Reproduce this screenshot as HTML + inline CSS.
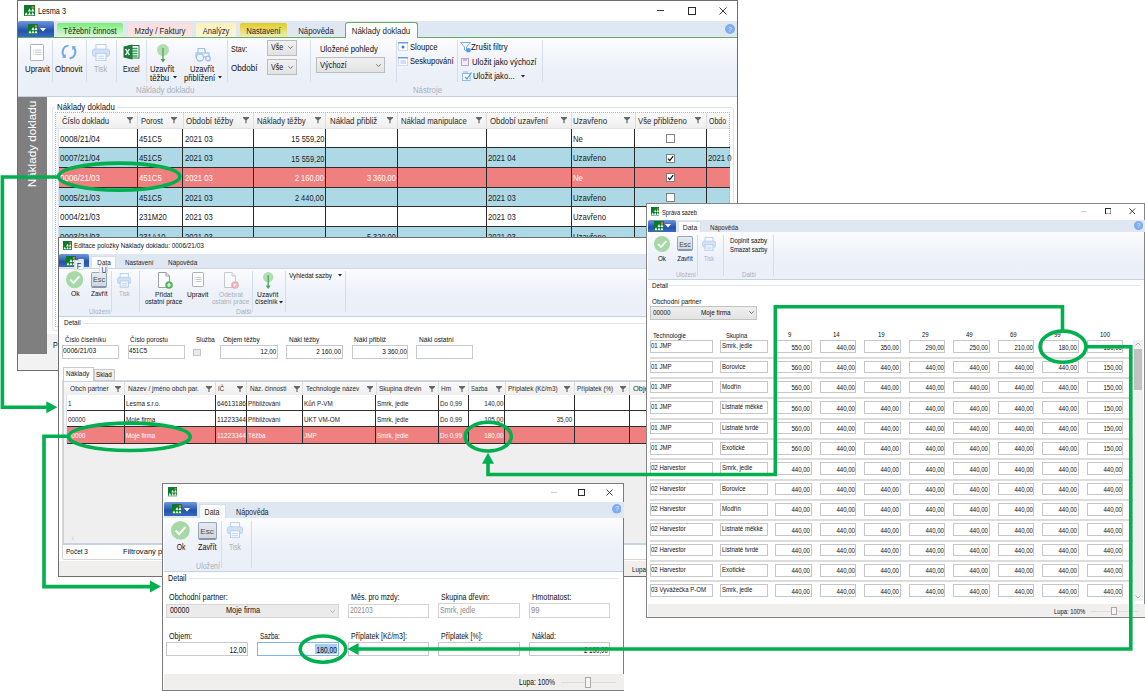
<!DOCTYPE html><html><head><meta charset="utf-8"><style>
html,body{margin:0;padding:0;}
body{width:1145px;height:691px;position:relative;overflow:hidden;background:#fff;font-family:"Liberation Sans", sans-serif;}
.a{position:absolute;}
.t{position:absolute;white-space:pre;font-family:"Liberation Sans", sans-serif;}
</style></head><body>
<div class="a" style="left:17px;top:0px;width:721px;height:371px;background:#fff;border:1px solid #6e6e6e;box-sizing:border-box;"></div>
<svg class="a" style="left:24px;top:5px;" width="11" height="11" viewBox="0 0 11 11"><rect x="0" y="0" width="11" height="11" fill="#0b7a2c"/><circle cx="8.8" cy="2.2" r="1.3199999999999998" fill="#f07020"/><path d="M2.20 6.93 L3.85 10.23 L0.55 10.23Z" fill="#f4fbf4"/><path d="M5.50 3.30 L7.15 6.60 L3.85 6.60Z" fill="#f4fbf4"/><path d="M5.50 6.93 L7.15 10.23 L3.85 10.23Z" fill="#f4fbf4"/><path d="M8.80 3.30 L10.45 6.60 L7.15 6.60Z" fill="#f4fbf4"/><path d="M8.80 6.93 L10.45 10.23 L7.15 10.23Z" fill="#f4fbf4"/></svg>
<div class="t" style="left:38px;transform-origin:0 50%;top:6.94px;font-size:8.47px;line-height:9.74px;color:#101010;transform:scaleX(0.8620);">Lesma 3</div>
<svg class="a" style="left:718.5px;top:6.5px;" width="8" height="8" viewBox="0 0 8 8"><path d="M0.5 0.5L7.5 7.5M7.5 0.5L0.5 7.5" stroke="#2b2b2b" stroke-width="0.9"/></svg>
<svg class="a" style="left:687.7px;top:6.5px;" width="8" height="8" viewBox="0 0 8 8"><rect x="0.5" y="0.5" width="7" height="7" fill="none" stroke="#2b2b2b" stroke-width="1"/></svg>
<svg class="a" style="left:657.4px;top:10.0px;" width="8" height="2" viewBox="0 0 8 2"><rect x="0" y="0" width="7" height="1" fill="#3a3a3a"/></svg>
<div class="a" style="left:18px;top:21px;width:719px;height:16px;background:#dfe7f2;"></div>
<div class="a" style="left:18px;top:37px;width:719px;height:1px;background:#64b064;"></div>
<div class="a" style="left:18px;top:21px;width:36px;height:16px;background:linear-gradient(#7098dc,#3564bd 45%,#2352aa 60%,#3a6ac4);border-radius:2px 2px 0 0;"></div>
<svg class="a" style="left:28.0px;top:24.0px;" width="10" height="10" viewBox="0 0 10 10"><rect x="0" y="0" width="10" height="10" fill="#0b7a2c"/><circle cx="8.0" cy="2.0" r="1.2" fill="#f07020"/><path d="M2.00 6.30 L3.50 9.30 L0.50 9.30Z" fill="#f4fbf4"/><path d="M5.00 3.00 L6.50 6.00 L3.50 6.00Z" fill="#f4fbf4"/><path d="M5.00 6.30 L6.50 9.30 L3.50 9.30Z" fill="#f4fbf4"/><path d="M8.00 3.00 L9.50 6.00 L6.50 6.00Z" fill="#f4fbf4"/><path d="M8.00 6.30 L9.50 9.30 L6.50 9.30Z" fill="#f4fbf4"/></svg>
<svg class="a" style="left:39.5px;top:27.5px;" width="6" height="4" viewBox="0 0 6 4"><path d="M0 0H6L3 3.5Z" fill="#fff"/></svg>
<div class="a" style="left:57px;top:23px;width:66px;height:14px;background:linear-gradient(#78ee78,#e4f6e0);border-radius:2px 2px 0 0;"></div>
<div class="t" style="left:42.0px;width:96px;text-align:center;transform-origin:50% 50%;top:26.94px;font-size:8.47px;line-height:9.74px;color:#262626;transform:scaleX(0.8914);">Těžební činnost</div>
<div class="a" style="left:128px;top:23px;width:64px;height:14px;background:linear-gradient(#fcdcdc,#fbe6e6);border-radius:2px 2px 0 0;"></div>
<div class="t" style="left:113.0px;width:94px;text-align:center;transform-origin:50% 50%;top:26.94px;font-size:8.47px;line-height:9.74px;color:#262626;transform:scaleX(0.9184);">Mzdy / Faktury</div>
<div class="a" style="left:196px;top:23px;width:40px;height:14px;background:linear-gradient(#fdf3b8,#faf6de);border-radius:2px 2px 0 0;"></div>
<div class="t" style="left:181.0px;width:70px;text-align:center;transform-origin:50% 50%;top:26.94px;font-size:8.47px;line-height:9.74px;color:#262626;transform:scaleX(0.8969);">Analýzy</div>
<div class="a" style="left:240px;top:23px;width:47px;height:14px;background:linear-gradient(#e0ce1e,#f0eab8);border-radius:2px 2px 0 0;"></div>
<div class="t" style="left:225.0px;width:77px;text-align:center;transform-origin:50% 50%;top:26.94px;font-size:8.47px;line-height:9.74px;color:#262626;transform:scaleX(0.9047);">Nastavení</div>
<div class="t" style="left:286.0px;width:60px;text-align:center;transform-origin:50% 50%;top:26.94px;font-size:8.47px;line-height:9.74px;color:#262626;transform:scaleX(0.9194);">Nápověda</div>
<div class="a" style="left:345px;top:22px;width:73px;height:16px;background:linear-gradient(#ffffff,#f9fbfd);border:1px solid #64b064;border-bottom:none;box-sizing:border-box;border-radius:3px 3px 0 0;"></div>
<div class="t" style="left:336.0px;width:90px;text-align:center;transform-origin:50% 50%;top:27.14px;font-size:8.47px;line-height:9.74px;color:#262626;transform:scaleX(0.9342);">Náklady dokladu</div>
<svg class="a" style="left:725px;top:23.7px;" width="10" height="10" viewBox="0 0 10 10"><circle cx="5" cy="5" r="5" fill="#7fadf0"/><text x="5" y="7.6" font-size="7.0" text-anchor="middle" fill="#e8f0ff" font-family="Liberation Sans">?</text></svg>
<div class="a" style="left:18px;top:38px;width:719px;height:59px;background:linear-gradient(#fdfdfe,#f1f4fa 35%,#ecf0f8 60%,#ebeff7);"></div>
<div class="a" style="left:18px;top:96px;width:719px;height:1px;background:#c4d1e3;"></div>
<div class="a" style="left:52px;top:40px;width:1px;height:42px;background:#d5dde9;"></div>
<div class="a" style="left:86px;top:40px;width:1px;height:42px;background:#d5dde9;"></div>
<div class="a" style="left:116px;top:40px;width:1px;height:42px;background:#d5dde9;"></div>
<div class="a" style="left:146px;top:40px;width:1px;height:42px;background:#d5dde9;"></div>
<div class="a" style="left:227px;top:40px;width:1px;height:42px;background:#d5dde9;"></div>
<div class="a" style="left:310px;top:40px;width:1px;height:42px;background:#d5dde9;"></div>
<div class="a" style="left:396px;top:40px;width:1px;height:42px;background:#d5dde9;"></div>
<div class="a" style="left:457px;top:40px;width:1px;height:42px;background:#d5dde9;"></div>
<div class="a" style="left:542px;top:40px;width:1px;height:42px;background:#d5dde9;"></div>
<svg class="a" style="left:30px;top:44px;" width="14" height="17" viewBox="0 0 14 17"><rect x="0.5" y="0.5" width="13" height="16" rx="0.8" fill="#fff" stroke="#a3a8b0" stroke-width="0.9"/><path d="M3.08 6.12H4.2M5.04 6.12H11.200000000000001" stroke="#a8adb5" stroke-width="0.7"/><path d="M3.08 8.22H4.2M5.04 8.22H11.200000000000001" stroke="#a8adb5" stroke-width="0.7"/><path d="M3.08 10.32H4.2M5.04 10.32H11.200000000000001" stroke="#a8adb5" stroke-width="0.7"/></svg>
<div class="t" style="left:24.8px;transform-origin:0 50%;top:64.94px;font-size:8.47px;line-height:9.74px;color:#101010;transform:scaleX(0.9282);">Upravit</div>
<svg class="a" style="left:60.3px;top:43px;" width="18" height="18" viewBox="0 0 18 18"><path d="M8.44 2.62A6.4 6.4 0 0 0 4.10 13.11" fill="none" stroke="#6aa4ee" stroke-width="1.8"/><path d="M9.56 15.38A6.4 6.4 0 0 0 13.90 4.89" fill="none" stroke="#6aa4ee" stroke-width="1.8"/><path d="M5.77 15.11L1.64 14.39L5.78 10.92Z" fill="#6aa4ee"/><path d="M12.23 2.89L16.36 3.61L12.22 7.08Z" fill="#6aa4ee"/></svg>
<div class="t" style="left:55.4px;transform-origin:0 50%;top:64.94px;font-size:8.47px;line-height:9.74px;color:#101010;transform:scaleX(0.9422);">Obnovit</div>
<svg class="a" style="left:92px;top:44px;" width="18" height="17" viewBox="0 0 18 17"><g opacity="0.45"><rect x="3.96" y="0.5" width="10.080000000000002" height="5.949999999999999" fill="#fff" stroke="#6fa0e0" stroke-width="1"/><rect x="0.5" y="5.1" width="17" height="7.14" rx="2" fill="#a9c8f0" stroke="#6fa0e0" stroke-width="1"/><rect x="3.96" y="9.350000000000001" width="10.080000000000002" height="7.31" fill="#fff" stroke="#6fa0e0" stroke-width="1"/><path d="M5.76 12.24H12.24M5.76 14.45H12.24" stroke="#6fa0e0" stroke-width="0.8"/></g></svg>
<div class="t" style="left:94.2px;transform-origin:0 50%;top:64.94px;font-size:8.47px;line-height:9.74px;color:#a9b0ba;transform:scaleX(0.8612);">Tisk</div>
<svg class="a" style="left:122.8px;top:44.2px;" width="17" height="16" viewBox="0 0 17 16"><rect x="6" y="1.5" width="10" height="12.5" fill="#fff" stroke="#1d7a3a" stroke-width="1"/><path d="M8 4.5H14.5M8 7H14.5M8 9.5H14.5M8 12H14.5" stroke="#33a053" stroke-width="1.3"/><path d="M0.5 2.5L9.5 0.5V15.5L0.5 13.5Z" fill="#1e7b3c"/><path d="M2.6 5L6.4 11M6.4 5L2.6 11" stroke="#fff" stroke-width="1.4"/></svg>
<div class="t" style="left:122.5px;transform-origin:0 50%;top:64.94px;font-size:8.47px;line-height:9.74px;color:#101010;transform:scaleX(0.8015);">Excel</div>
<svg class="a" style="left:156px;top:42.9px;" width="14" height="21" viewBox="0 0 14 21"><g opacity="0.9"><circle cx="7" cy="7" r="6" fill="#a8dca8"/><path d="M7 5V18" stroke="#3c9a4c" stroke-width="1.3"/><path d="M4.5 16L7 19.5L9.5 16Z" fill="#3c9a4c"/></g></svg>
<div class="t" style="left:149.6px;transform-origin:0 50%;top:64.94px;font-size:8.47px;line-height:9.74px;color:#101010;transform:scaleX(0.9022);">Uzavřít</div>
<div class="t" style="left:150px;transform-origin:0 50%;top:73.54px;font-size:8.47px;line-height:9.74px;color:#101010;transform:scaleX(0.9267);">těžbu</div>
<svg class="a" style="left:172.5px;top:76.3px;" width="4" height="3" viewBox="0 0 4 3"><path d="M0 0H4L2 2.5Z" fill="#222"/></svg>
<svg class="a" style="left:194.5px;top:47.2px;" width="17" height="15" viewBox="0 0 17 15"><path d="M3 6V1.5H9.5L10.5 6" fill="none" stroke="#9cc0ee" stroke-width="1.2"/><rect x="1" y="6" width="13" height="4" fill="none" stroke="#9cc0ee" stroke-width="1.2"/><circle cx="5" cy="10.5" r="3.6" fill="#eef3fa" stroke="#9cc0ee" stroke-width="1.2"/><circle cx="13" cy="11.5" r="2.3" fill="#eef3fa" stroke="#9cc0ee" stroke-width="1.2"/></svg>
<div class="t" style="left:189.8px;transform-origin:0 50%;top:64.94px;font-size:8.47px;line-height:9.74px;color:#101010;transform:scaleX(0.8985);">Uzavřít</div>
<div class="t" style="left:184.3px;transform-origin:0 50%;top:73.54px;font-size:8.47px;line-height:9.74px;color:#101010;transform:scaleX(0.9050);">přiblížení</div>
<svg class="a" style="left:217.6px;top:76.3px;" width="4" height="3" viewBox="0 0 4 3"><path d="M0 0H4L2 2.5Z" fill="#222"/></svg>
<div class="t" style="left:135.6px;transform-origin:0 50%;top:85.54px;font-size:8.47px;line-height:9.74px;color:#a9b0ba;transform:scaleX(0.9326);">Náklady dokladu</div>
<div class="t" style="left:230.6px;transform-origin:0 50%;top:45.14px;font-size:8.47px;line-height:9.74px;color:#101010;transform:scaleX(0.8393);">Stav:</div>
<div class="t" style="left:230.6px;transform-origin:0 50%;top:64.14px;font-size:8.47px;line-height:9.74px;color:#101010;transform:scaleX(0.9575);">Období</div>
<div class="a" style="left:266.5px;top:40px;width:30.5px;height:15.600000000000001px;background:linear-gradient(#f1f1f1,#e2e2e2);border:1px solid #bdbdbd;box-sizing:border-box;"></div>
<div class="t" style="left:270.5px;transform-origin:0 50%;top:43.34px;font-size:8.47px;line-height:9.74px;color:#101010;transform:scaleX(0.8359);">Vše</div>
<svg class="a" style="left:288.3px;top:46.3px;" width="5" height="3" viewBox="0 0 5 3"><path d="M0.3 0.3L2.5 2.5L4.7 0.3" fill="none" stroke="#666" stroke-width="0.9"/></svg>
<div class="a" style="left:266.5px;top:59.4px;width:30.5px;height:16.1px;background:linear-gradient(#f1f1f1,#e2e2e2);border:1px solid #bdbdbd;box-sizing:border-box;"></div>
<div class="t" style="left:270.5px;transform-origin:0 50%;top:62.99px;font-size:8.47px;line-height:9.74px;color:#101010;transform:scaleX(0.8359);">Vše</div>
<svg class="a" style="left:288.3px;top:65.95px;" width="5" height="3" viewBox="0 0 5 3"><path d="M0.3 0.3L2.5 2.5L4.7 0.3" fill="none" stroke="#666" stroke-width="0.9"/></svg>
<div class="t" style="left:319.7px;transform-origin:0 50%;top:45.04px;font-size:8.47px;line-height:9.74px;color:#101010;transform:scaleX(0.9177);">Uložené pohledy</div>
<div class="a" style="left:316px;top:57px;width:68.6px;height:15.7px;background:linear-gradient(#f1f1f1,#e2e2e2);border:1px solid #bdbdbd;box-sizing:border-box;"></div>
<div class="t" style="left:320.3px;transform-origin:0 50%;top:60.74px;font-size:8.47px;line-height:9.74px;color:#101010;transform:scaleX(0.8829);">Výchozí</div>
<svg class="a" style="left:376.3px;top:63.5px;" width="5" height="3" viewBox="0 0 5 3"><path d="M0.3 0.3L2.5 2.5L4.7 0.3" fill="none" stroke="#666" stroke-width="0.9"/></svg>
<svg class="a" style="left:398px;top:42px;" width="10" height="9" viewBox="0 0 10 9"><rect x="0.5" y="0.5" width="9" height="8" fill="#fff" stroke="#cfdcee" stroke-width="1"/><rect x="0" y="0" width="10" height="1.5" fill="#6a9fe0"/><circle cx="5" cy="5" r="1.5" fill="#3a7ad8"/></svg>
<div class="t" style="left:409.7px;transform-origin:0 50%;top:43.14px;font-size:8.47px;line-height:9.74px;color:#101010;transform:scaleX(0.8985);">Sloupce</div>
<svg class="a" style="left:398px;top:57px;" width="10" height="9" viewBox="0 0 10 9"><rect x="0.5" y="0.5" width="9" height="8" fill="#fff" stroke="#cfdcee" stroke-width="1"/><rect x="0" y="0" width="10" height="1.5" fill="#6a9fe0"/><path d="M2.5 4H8M2.5 6H8" stroke="#8ab0e0" stroke-width="0.8"/></svg>
<div class="t" style="left:409.7px;transform-origin:0 50%;top:57.24px;font-size:8.47px;line-height:9.74px;color:#101010;transform:scaleX(0.8904);">Seskupování</div>
<div class="t" style="left:412.9px;transform-origin:0 50%;top:85.64px;font-size:8.47px;line-height:9.74px;color:#a9b0ba;transform:scaleX(0.9195);">Nástroje</div>
<svg class="a" style="left:459.5px;top:42px;" width="12" height="11" viewBox="0 0 12 11"><path d="M0.5 0.5H10.5L6.5 5V9L4.5 8V5Z" fill="none" stroke="#7ab0e8" stroke-width="1"/><circle cx="8.5" cy="8.3" r="2.3" fill="#5a9ae6"/></svg>
<div class="t" style="left:471.4px;transform-origin:0 50%;top:43.14px;font-size:8.47px;line-height:9.74px;color:#101010;transform:scaleX(0.9372);">Zrušit filtry</div>
<svg class="a" style="left:461px;top:57.5px;" width="8" height="8" viewBox="0 0 8 8"><rect x="0.5" y="0.5" width="7" height="7" fill="#f4eef8" stroke="#b7a0d0" stroke-width="1"/><rect x="2" y="0.5" width="4" height="2.5" fill="#c8b5dc"/></svg>
<div class="t" style="left:471.5px;transform-origin:0 50%;top:57.84px;font-size:8.47px;line-height:9.74px;color:#101010;transform:scaleX(0.9196);">Uložit jako výchozí</div>
<svg class="a" style="left:462px;top:71px;" width="10" height="10" viewBox="0 0 10 10"><rect x="0.5" y="2.5" width="7.5" height="7" fill="#fff" stroke="#8bbbe8" stroke-width="1"/><path d="M3 6L5 8L9.5 1.5" fill="none" stroke="#5a9ae6" stroke-width="1.2"/><path d="M1 1H6" stroke="#8bbbe8" stroke-width="1"/></svg>
<div class="t" style="left:472.5px;transform-origin:0 50%;top:72.14px;font-size:8.47px;line-height:9.74px;color:#101010;transform:scaleX(0.8997);">Uložit jako...</div>
<svg class="a" style="left:521px;top:75px;" width="4" height="3" viewBox="0 0 4 3"><path d="M0 0H4L2 2.5Z" fill="#222"/></svg>
<div class="a" style="left:18px;top:97px;width:719px;height:273px;background:#ffffff;"></div>
<div class="a" style="left:18px;top:334px;width:719px;height:36px;background:#f2f2f2;"></div>
<div class="a" style="left:18px;top:97px;width:29px;height:257px;background:#7f7f7f;"></div>
<div class="t" style="left:-12.5px;top:137px;width:87px;height:14px;line-height:14px;text-align:center;color:#fff;font-size:11.7px;transform:rotate(-90deg);">Náklady dokladu</div>
<div class="a" style="left:51.5px;top:106.5px;width:682px;height:224px;border:1px solid #dfe5ec;border-radius:3px;box-sizing:border-box;"></div>
<div class="a" style="left:55px;top:100px;width:62px;height:12px;background:#fff;"></div>
<div class="t" style="left:56.6px;transform-origin:0 50%;top:102.74px;font-size:8.47px;line-height:9.74px;color:#101010;transform:scaleX(0.9230);">Náklady dokladu</div>
<div class="a" style="left:54.5px;top:111.5px;width:675.5px;height:215.5px;border:1px dotted #a6b2c2;box-sizing:border-box;background:#fff;"></div>
<div class="a" style="left:55.5px;top:112.5px;width:674px;height:16.0px;background:linear-gradient(#fafafa,#eeeeee);"></div>
<div class="a" style="left:55.5px;top:128.0px;width:674.0px;height:1px;background:#e3e3e3;"></div>
<div class="a" style="left:136.6px;top:112.5px;width:1px;height:16.0px;background:#dedede;"></div>
<div class="a" style="left:182.5px;top:112.5px;width:1px;height:16.0px;background:#dedede;"></div>
<div class="a" style="left:252.9px;top:112.5px;width:1px;height:16.0px;background:#dedede;"></div>
<div class="a" style="left:325.2px;top:112.5px;width:1px;height:16.0px;background:#dedede;"></div>
<div class="a" style="left:396.8px;top:112.5px;width:1px;height:16.0px;background:#dedede;"></div>
<div class="a" style="left:486.2px;top:112.5px;width:1px;height:16.0px;background:#dedede;"></div>
<div class="a" style="left:571.0px;top:112.5px;width:1px;height:16.0px;background:#dedede;"></div>
<div class="a" style="left:634.5px;top:112.5px;width:1px;height:16.0px;background:#dedede;"></div>
<div class="a" style="left:706.0px;top:112.5px;width:1px;height:16.0px;background:#dedede;"></div>
<div class="t" style="left:61.7px;transform-origin:0 50%;top:116.74px;font-size:8.47px;line-height:9.74px;color:#2a2a2a;transform:scaleX(0.9178);">Číslo dokladu</div>
<svg class="a" style="left:126.6px;top:117.2px;" width="6" height="6.5" viewBox="0 0 6 6.5"><path d="M0 0H6V0.9L3.6 3.2V6.2H2.4V3.2L0 0.9Z" fill="#666"/></svg>
<div class="t" style="left:140.7px;transform-origin:0 50%;top:116.74px;font-size:8.47px;line-height:9.74px;color:#2a2a2a;transform:scaleX(0.8947);">Porost</div>
<svg class="a" style="left:171.2px;top:117.2px;" width="6" height="6.5" viewBox="0 0 6 6.5"><path d="M0 0H6V0.9L3.6 3.2V6.2H2.4V3.2L0 0.9Z" fill="#666"/></svg>
<div class="t" style="left:186.3px;transform-origin:0 50%;top:116.74px;font-size:8.47px;line-height:9.74px;color:#2a2a2a;transform:scaleX(0.9369);">Období těžby</div>
<svg class="a" style="left:243px;top:117.2px;" width="6" height="6.5" viewBox="0 0 6 6.5"><path d="M0 0H6V0.9L3.6 3.2V6.2H2.4V3.2L0 0.9Z" fill="#666"/></svg>
<div class="t" style="left:257.1px;transform-origin:0 50%;top:116.74px;font-size:8.47px;line-height:9.74px;color:#2a2a2a;transform:scaleX(0.9155);">Náklady těžby</div>
<svg class="a" style="left:314.7px;top:117.2px;" width="6" height="6.5" viewBox="0 0 6 6.5"><path d="M0 0H6V0.9L3.6 3.2V6.2H2.4V3.2L0 0.9Z" fill="#666"/></svg>
<div class="t" style="left:329.9px;transform-origin:0 50%;top:116.74px;font-size:8.47px;line-height:9.74px;color:#2a2a2a;transform:scaleX(0.9284);">Náklad přibliž</div>
<svg class="a" style="left:386.6px;top:117.2px;" width="6" height="6.5" viewBox="0 0 6 6.5"><path d="M0 0H6V0.9L3.6 3.2V6.2H2.4V3.2L0 0.9Z" fill="#666"/></svg>
<div class="t" style="left:400.9px;transform-origin:0 50%;top:116.74px;font-size:8.47px;line-height:9.74px;color:#2a2a2a;transform:scaleX(0.9121);">Náklad manipulace</div>
<svg class="a" style="left:475.8px;top:117.2px;" width="6" height="6.5" viewBox="0 0 6 6.5"><path d="M0 0H6V0.9L3.6 3.2V6.2H2.4V3.2L0 0.9Z" fill="#666"/></svg>
<div class="t" style="left:490.2px;transform-origin:0 50%;top:116.74px;font-size:8.47px;line-height:9.74px;color:#2a2a2a;transform:scaleX(0.9246);">Období uzavření</div>
<svg class="a" style="left:560.6px;top:117.2px;" width="6" height="6.5" viewBox="0 0 6 6.5"><path d="M0 0H6V0.9L3.6 3.2V6.2H2.4V3.2L0 0.9Z" fill="#666"/></svg>
<div class="t" style="left:573.1px;transform-origin:0 50%;top:116.74px;font-size:8.47px;line-height:9.74px;color:#2a2a2a;transform:scaleX(0.9408);">Uzavřeno</div>
<svg class="a" style="left:624.1px;top:117.2px;" width="6" height="6.5" viewBox="0 0 6 6.5"><path d="M0 0H6V0.9L3.6 3.2V6.2H2.4V3.2L0 0.9Z" fill="#666"/></svg>
<div class="t" style="left:637.8px;transform-origin:0 50%;top:116.74px;font-size:8.47px;line-height:9.74px;color:#2a2a2a;transform:scaleX(0.9173);">Vše přibliženo</div>
<svg class="a" style="left:695.4px;top:117.2px;" width="6" height="6.5" viewBox="0 0 6 6.5"><path d="M0 0H6V0.9L3.6 3.2V6.2H2.4V3.2L0 0.9Z" fill="#666"/></svg>
<div class="t" style="left:709.3px;transform-origin:0 50%;top:116.74px;font-size:8.47px;line-height:9.74px;color:#2a2a2a;transform:scaleX(0.8205);">Obdo</div>
<div class="a" style="left:55.5px;top:128.5px;width:674px;height:19.5px;background:#ffffff;"></div>
<div class="t" style="left:60.300000000000004px;transform-origin:0 50%;top:134.94px;font-size:8.47px;line-height:9.74px;color:#1a1a1a;transform:scaleX(0.9437);">0008/21/04</div>
<div class="t" style="left:138.7px;transform-origin:0 50%;top:134.94px;font-size:8.47px;line-height:9.74px;color:#1a1a1a;transform:scaleX(0.9091);">451C5</div>
<div class="t" style="left:184.6px;transform-origin:0 50%;top:134.94px;font-size:8.47px;line-height:9.74px;color:#1a1a1a;transform:scaleX(0.9091);">2021 03</div>
<div class="t" style="right:820.8px;transform-origin:100% 50%;top:135.1px;font-size:8.2px;line-height:9.43px;color:#1a1a1a;transform:scaleX(0.9085);">15 559,20</div>
<div class="t" style="left:573.1px;transform-origin:0 50%;top:134.94px;font-size:8.47px;line-height:9.74px;color:#1a1a1a;transform:scaleX(0.9091);">Ne</div>
<svg class="a" style="left:666.25px;top:134.0px;" width="9" height="9" viewBox="0 0 9 9"><rect x="0.5" y="0.5" width="8" height="8" fill="#fff" stroke="#777" stroke-width="0.9"/></svg>
<div class="a" style="left:55.5px;top:147px;width:674.0px;height:1.3px;background:#2e2e2e;"></div>
<div class="a" style="left:55.5px;top:148px;width:674px;height:19.5px;background:#add8e6;"></div>
<div class="t" style="left:60.300000000000004px;transform-origin:0 50%;top:154.44px;font-size:8.47px;line-height:9.74px;color:#1a1a1a;transform:scaleX(0.9437);">0007/21/04</div>
<div class="t" style="left:138.7px;transform-origin:0 50%;top:154.44px;font-size:8.47px;line-height:9.74px;color:#1a1a1a;transform:scaleX(0.9091);">451C5</div>
<div class="t" style="left:184.6px;transform-origin:0 50%;top:154.44px;font-size:8.47px;line-height:9.74px;color:#1a1a1a;transform:scaleX(0.9091);">2021 03</div>
<div class="t" style="right:820.8px;transform-origin:100% 50%;top:154.6px;font-size:8.2px;line-height:9.43px;color:#1a1a1a;transform:scaleX(0.9085);">15 559,20</div>
<div class="t" style="left:488.3px;transform-origin:0 50%;top:154.44px;font-size:8.47px;line-height:9.74px;color:#1a1a1a;transform:scaleX(0.9091);">2021 04</div>
<div class="t" style="left:573.1px;transform-origin:0 50%;top:154.44px;font-size:8.47px;line-height:9.74px;color:#1a1a1a;transform:scaleX(0.9091);">Uzavřeno</div>
<svg class="a" style="left:666.25px;top:153.5px;" width="9" height="9" viewBox="0 0 9 9"><rect x="0.5" y="0.5" width="8" height="8" fill="#fff" stroke="#777" stroke-width="0.9"/><path d="M2 4.6L3.8 6.6L7.2 2.2" fill="none" stroke="#111" stroke-width="1.3"/></svg>
<div class="t" style="left:708.1px;transform-origin:0 50%;top:154.44px;font-size:8.47px;line-height:9.74px;color:#1a1a1a;transform:scaleX(0.9091);">2021 0</div>
<div class="a" style="left:55.5px;top:166.5px;width:674.0px;height:1.3px;background:#2e2e2e;"></div>
<div class="a" style="left:55.5px;top:167.5px;width:674px;height:20.0px;background:#f08080;"></div>
<div class="t" style="left:60.300000000000004px;transform-origin:0 50%;top:173.94px;font-size:8.47px;line-height:9.74px;color:#ffffff;transform:scaleX(0.9437);">0006/21/03</div>
<div class="t" style="left:138.7px;transform-origin:0 50%;top:173.94px;font-size:8.47px;line-height:9.74px;color:#ffffff;transform:scaleX(0.9091);">451C5</div>
<div class="t" style="left:184.6px;transform-origin:0 50%;top:173.94px;font-size:8.47px;line-height:9.74px;color:#ffffff;transform:scaleX(0.9091);">2021 03</div>
<div class="t" style="right:820.8px;transform-origin:100% 50%;top:174.1px;font-size:8.2px;line-height:9.43px;color:#ffffff;transform:scaleX(0.9085);">2 160,00</div>
<div class="t" style="right:749.2px;transform-origin:100% 50%;top:174.1px;font-size:8.2px;line-height:9.43px;color:#ffffff;transform:scaleX(0.9085);">3 360,00</div>
<div class="t" style="left:573.1px;transform-origin:0 50%;top:173.94px;font-size:8.47px;line-height:9.74px;color:#ffffff;transform:scaleX(0.9091);">Ne</div>
<svg class="a" style="left:666.25px;top:173.0px;" width="9" height="9" viewBox="0 0 9 9"><rect x="0.5" y="0.5" width="8" height="8" fill="#fff" stroke="#777" stroke-width="0.9"/><path d="M2 4.6L3.8 6.6L7.2 2.2" fill="none" stroke="#111" stroke-width="1.3"/></svg>
<div class="a" style="left:55.5px;top:186.5px;width:674.0px;height:1.3px;background:#2e2e2e;"></div>
<div class="a" style="left:55.5px;top:187.5px;width:674px;height:19.5px;background:#add8e6;"></div>
<div class="t" style="left:60.300000000000004px;transform-origin:0 50%;top:193.94px;font-size:8.47px;line-height:9.74px;color:#1a1a1a;transform:scaleX(0.9437);">0005/21/03</div>
<div class="t" style="left:138.7px;transform-origin:0 50%;top:193.94px;font-size:8.47px;line-height:9.74px;color:#1a1a1a;transform:scaleX(0.9091);">451C5</div>
<div class="t" style="left:184.6px;transform-origin:0 50%;top:193.94px;font-size:8.47px;line-height:9.74px;color:#1a1a1a;transform:scaleX(0.9091);">2021 03</div>
<div class="t" style="right:820.8px;transform-origin:100% 50%;top:194.1px;font-size:8.2px;line-height:9.43px;color:#1a1a1a;transform:scaleX(0.9085);">2 440,00</div>
<div class="t" style="left:488.3px;transform-origin:0 50%;top:193.94px;font-size:8.47px;line-height:9.74px;color:#1a1a1a;transform:scaleX(0.9091);">2021 03</div>
<div class="t" style="left:573.1px;transform-origin:0 50%;top:193.94px;font-size:8.47px;line-height:9.74px;color:#1a1a1a;transform:scaleX(0.9091);">Uzavřeno</div>
<svg class="a" style="left:666.25px;top:193.0px;" width="9" height="9" viewBox="0 0 9 9"><rect x="0.5" y="0.5" width="8" height="8" fill="#fff" stroke="#777" stroke-width="0.9"/></svg>
<div class="a" style="left:55.5px;top:206px;width:674.0px;height:1.3px;background:#2e2e2e;"></div>
<div class="a" style="left:55.5px;top:207px;width:674px;height:19.5px;background:#ffffff;"></div>
<div class="t" style="left:60.300000000000004px;transform-origin:0 50%;top:213.44px;font-size:8.47px;line-height:9.74px;color:#1a1a1a;transform:scaleX(0.9437);">0004/21/03</div>
<div class="t" style="left:138.7px;transform-origin:0 50%;top:213.44px;font-size:8.47px;line-height:9.74px;color:#1a1a1a;transform:scaleX(0.9091);">231M20</div>
<div class="t" style="left:184.6px;transform-origin:0 50%;top:213.44px;font-size:8.47px;line-height:9.74px;color:#1a1a1a;transform:scaleX(0.9091);">2021 03</div>
<div class="t" style="left:488.3px;transform-origin:0 50%;top:213.44px;font-size:8.47px;line-height:9.74px;color:#1a1a1a;transform:scaleX(0.9091);">2021 03</div>
<div class="t" style="left:573.1px;transform-origin:0 50%;top:213.44px;font-size:8.47px;line-height:9.74px;color:#1a1a1a;transform:scaleX(0.9091);">Uzavřeno</div>
<svg class="a" style="left:666.25px;top:212.5px;" width="9" height="9" viewBox="0 0 9 9"><rect x="0.5" y="0.5" width="8" height="8" fill="#fff" stroke="#777" stroke-width="0.9"/></svg>
<div class="a" style="left:55.5px;top:225.5px;width:674.0px;height:1.3px;background:#2e2e2e;"></div>
<div class="a" style="left:55.5px;top:226.5px;width:674px;height:19.5px;background:#add8e6;"></div>
<div class="t" style="left:60.300000000000004px;transform-origin:0 50%;top:232.94px;font-size:8.47px;line-height:9.74px;color:#1a1a1a;transform:scaleX(0.9437);">0003/21/03</div>
<div class="t" style="left:138.7px;transform-origin:0 50%;top:232.94px;font-size:8.47px;line-height:9.74px;color:#1a1a1a;transform:scaleX(0.9091);">231A10</div>
<div class="t" style="left:184.6px;transform-origin:0 50%;top:232.94px;font-size:8.47px;line-height:9.74px;color:#1a1a1a;transform:scaleX(0.9091);">2021 03</div>
<div class="t" style="right:749.2px;transform-origin:100% 50%;top:233.1px;font-size:8.2px;line-height:9.43px;color:#1a1a1a;transform:scaleX(0.9085);">5 320,00</div>
<div class="t" style="left:488.3px;transform-origin:0 50%;top:232.94px;font-size:8.47px;line-height:9.74px;color:#1a1a1a;transform:scaleX(0.9091);">2021 03</div>
<div class="t" style="left:573.1px;transform-origin:0 50%;top:232.94px;font-size:8.47px;line-height:9.74px;color:#1a1a1a;transform:scaleX(0.9091);">Uzavřeno</div>
<svg class="a" style="left:666.25px;top:232.0px;" width="9" height="9" viewBox="0 0 9 9"><rect x="0.5" y="0.5" width="8" height="8" fill="#fff" stroke="#777" stroke-width="0.9"/></svg>
<div class="a" style="left:55.5px;top:245px;width:674.0px;height:1.3px;background:#2e2e2e;"></div>
<div class="a" style="left:136.5px;top:128.5px;width:1.1px;height:117.5px;background:#2a2a2a;"></div>
<div class="a" style="left:182.4px;top:128.5px;width:1.1px;height:117.5px;background:#2a2a2a;"></div>
<div class="a" style="left:252.8px;top:128.5px;width:1.1px;height:117.5px;background:#2a2a2a;"></div>
<div class="a" style="left:325.09999999999997px;top:128.5px;width:1.1px;height:117.5px;background:#2a2a2a;"></div>
<div class="a" style="left:396.7px;top:128.5px;width:1.1px;height:117.5px;background:#2a2a2a;"></div>
<div class="a" style="left:486.09999999999997px;top:128.5px;width:1.1px;height:117.5px;background:#2a2a2a;"></div>
<div class="a" style="left:570.9px;top:128.5px;width:1.1px;height:117.5px;background:#2a2a2a;"></div>
<div class="a" style="left:634.4px;top:128.5px;width:1.1px;height:117.5px;background:#2a2a2a;"></div>
<div class="a" style="left:705.9px;top:128.5px;width:1.1px;height:117.5px;background:#2a2a2a;"></div>
<div class="a" style="left:55.5px;top:128.5px;width:3.2px;height:117.5px;background:#f4f6f9;"></div>
<div class="a" style="left:729px;top:111.5px;width:1px;height:215px;border-left:1px dotted #a6b2c2;"></div>
<div class="a" style="left:58.2px;top:128.5px;width:0.8px;height:117.5px;background:#d8e2ee;"></div>
<div class="t" style="left:53px;transform-origin:0 50%;top:341.14px;font-size:8.47px;line-height:9.74px;color:#101010;transform:scaleX(0.8356);">Počet 6</div>
<div class="a" style="left:58px;top:237px;width:642px;height:340px;background:#fff;border:1px solid #707070;box-sizing:border-box;"></div>
<svg class="a" style="left:63px;top:241px;" width="9" height="9" viewBox="0 0 9 9"><rect x="0" y="0" width="9" height="9" fill="#0b7a2c"/><circle cx="7.2" cy="1.8" r="1.08" fill="#f07020"/><path d="M1.80 5.67 L3.15 8.37 L0.45 8.37Z" fill="#f4fbf4"/><path d="M4.50 2.70 L5.85 5.40 L3.15 5.40Z" fill="#f4fbf4"/><path d="M4.50 5.67 L5.85 8.37 L3.15 8.37Z" fill="#f4fbf4"/><path d="M7.20 2.70 L8.55 5.40 L5.85 5.40Z" fill="#f4fbf4"/><path d="M7.20 5.67 L8.55 8.37 L5.85 8.37Z" fill="#f4fbf4"/></svg>
<div class="t" style="left:74.4px;transform-origin:0 50%;top:242.38px;font-size:7.7px;line-height:8.85px;color:#101010;transform:scaleX(0.8344);">Editace položky Náklady dokladu: 0006/21/03</div>
<div class="a" style="left:59px;top:254px;width:640px;height:14px;background:#dfe7f2;"></div>
<div class="a" style="left:59px;top:254.3px;width:30px;height:12.7px;background:linear-gradient(#7098dc,#3564bd 45%,#2352aa 60%,#3a6ac4);border-radius:2px 2px 0 0;"></div>
<svg class="a" style="left:66.0px;top:255.65px;" width="10" height="10" viewBox="0 0 10 10"><rect x="0" y="0" width="10" height="10" fill="#0b7a2c"/><circle cx="8.0" cy="2.0" r="1.2" fill="#f07020"/><path d="M2.00 6.30 L3.50 9.30 L0.50 9.30Z" fill="#f4fbf4"/><path d="M5.00 3.00 L6.50 6.00 L3.50 6.00Z" fill="#f4fbf4"/><path d="M5.00 6.30 L6.50 9.30 L3.50 9.30Z" fill="#f4fbf4"/><path d="M8.00 3.00 L9.50 6.00 L6.50 6.00Z" fill="#f4fbf4"/><path d="M8.00 6.30 L9.50 9.30 L6.50 9.30Z" fill="#f4fbf4"/></svg>
<svg class="a" style="left:77.5px;top:259.15000000000003px;" width="6" height="4" viewBox="0 0 6 4"><path d="M0 0H6L3 3.5Z" fill="#fff"/></svg>
<div class="a" style="left:91.4px;top:255.5px;width:24.7px;height:13px;background:linear-gradient(#fff,#f8fafd);border:1px solid #d5deea;border-bottom:none;box-sizing:border-box;"></div>
<div class="t" style="left:83.75px;width:40px;text-align:center;transform-origin:50% 50%;top:258.78px;font-size:7.7px;line-height:8.85px;color:#262626;transform:scaleX(0.8239);">Data</div>
<div class="t" style="left:124.7px;transform-origin:0 50%;top:259.18px;font-size:7.7px;line-height:8.85px;color:#262626;transform:scaleX(0.8221);">Nastavení</div>
<div class="t" style="left:168px;transform-origin:0 50%;top:259.18px;font-size:7.7px;line-height:8.85px;color:#262626;transform:scaleX(0.8347);">Nápověda</div>
<div class="a" style="left:59px;top:268px;width:640px;height:48.5px;background:linear-gradient(#fdfdfe,#f1f4fa 35%,#ecf0f8 60%,#ebeff7);"></div>
<div class="a" style="left:59px;top:315.5px;width:640px;height:1px;background:#c4d1e3;"></div>
<div class="a" style="left:59px;top:267.6px;width:640px;height:0.8px;background:#cbd7e7;"></div>
<svg class="a" style="left:66.25px;top:271.4px;" width="17.2" height="17.2" viewBox="0 0 17.2 17.2"><circle cx="8.6" cy="8.6" r="8.6" fill="#a6d9a6"/><path d="M4.30 8.60L7.57 11.87L13.33 5.33" fill="none" stroke="#fff" stroke-width="1.89"/></svg>
<div class="a" style="left:90.6px;top:272px;width:16.10000000000001px;height:15.699999999999989px;box-sizing:border-box;border:1px solid #97a6ba;border-bottom:2px solid #8796aa;border-radius:2px;background:linear-gradient(#e6ebf2,#cfd7e2);"></div>
<div class="t" style="left:83.65px;width:30px;text-align:center;transform-origin:50% 50%;top:276.48px;font-size:7.25px;line-height:8.34px;color:#4a4a4a;transform:scaleX(0.9858);">Esc</div>
<div class="t" style="left:70.5px;transform-origin:0 50%;top:290.18px;font-size:7.7px;line-height:8.85px;color:#101010;transform:scaleX(0.8842);">Ok</div>
<div class="t" style="left:90.6px;transform-origin:0 50%;top:290.18px;font-size:7.7px;line-height:8.85px;color:#101010;transform:scaleX(0.8385);">Zavřít</div>
<svg class="a" style="left:116.9px;top:273px;" width="14.5" height="14.5" viewBox="0 0 14.5 14.5"><g opacity="0.45"><rect x="3.19" y="0.5" width="8.120000000000001" height="5.074999999999999" fill="#fff" stroke="#6fa0e0" stroke-width="1"/><rect x="0.5" y="4.35" width="13.5" height="6.09" rx="2" fill="#a9c8f0" stroke="#6fa0e0" stroke-width="1"/><rect x="3.19" y="7.9750000000000005" width="8.120000000000001" height="6.235" fill="#fff" stroke="#6fa0e0" stroke-width="1"/><path d="M4.64 10.44H9.860000000000001M4.64 12.325H9.860000000000001" stroke="#6fa0e0" stroke-width="0.8"/></g></svg>
<div class="t" style="left:118.9px;transform-origin:0 50%;top:290.18px;font-size:7.7px;line-height:8.85px;color:#a9b0ba;transform:scaleX(0.7665);">Tisk</div>
<div class="a" style="left:111px;top:271px;width:1px;height:41px;background:#d5dde9;"></div>
<div class="a" style="left:139px;top:271px;width:1px;height:41px;background:#d5dde9;"></div>
<div class="t" style="left:88.9px;transform-origin:0 50%;top:307.58px;font-size:7.7px;line-height:8.85px;color:#a9b0ba;transform:scaleX(0.8235);">Uložení</div>
<div class="a" style="left:74px;top:260.2px;width:10.299999999999997px;height:9.800000000000011px;box-sizing:border-box;border:1px solid #d6dde6;background:rgba(246,248,251,0.92);"></div>
<div class="t" style="left:69.15px;width:20px;text-align:center;transform-origin:50% 50%;top:261.26px;font-size:8.8px;line-height:10.12px;color:#333;transform:scaleX(0.8182);">F</div>
<div class="a" style="left:98.8px;top:265.3px;width:9.5px;height:7.899999999999977px;box-sizing:border-box;border:1px solid #d6dde6;background:rgba(246,248,251,0.92);"></div>
<div class="t" style="left:93.55px;width:20px;text-align:center;transform-origin:50% 50%;top:265.41px;font-size:8.8px;line-height:10.12px;color:#333;transform:scaleX(0.8182);">U</div>
<svg class="a" style="left:157.5px;top:271.5px;" width="15" height="17" viewBox="0 0 15 17"><g opacity="1"><path d="M0.5 0.5H8L11.5 4V15.5H0.5Z" fill="#fff" stroke="#8e939a" stroke-width="0.9"/><path d="M8 0.5V4H11.5" fill="none" stroke="#8e939a" stroke-width="0.9"/><circle cx="11" cy="13" r="3.8" fill="#4fb85f"/><path d="M11 11V15M9 13H13" stroke="#fff" stroke-width="1.2"/></g></svg>
<div class="t" style="left:154.9px;transform-origin:0 50%;top:291.18px;font-size:7.7px;line-height:8.85px;color:#1e1e1e;transform:scaleX(0.8651);">Přidat</div>
<div class="t" style="left:145.4px;transform-origin:0 50%;top:298.18px;font-size:7.7px;line-height:8.85px;color:#101010;transform:scaleX(0.8380);">ostatní práce</div>
<svg class="a" style="left:192px;top:272px;" width="12" height="15" viewBox="0 0 12 15"><rect x="0.5" y="0.5" width="11" height="14" rx="0.8" fill="#fff" stroke="#a3a8b0" stroke-width="0.9"/><path d="M2.64 5.40H3.5999999999999996M4.32 5.40H9.600000000000001" stroke="#a8adb5" stroke-width="0.7"/><path d="M2.64 7.50H3.5999999999999996M4.32 7.50H9.600000000000001" stroke="#a8adb5" stroke-width="0.7"/><path d="M2.64 9.60H3.5999999999999996M4.32 9.60H9.600000000000001" stroke="#a8adb5" stroke-width="0.7"/></svg>
<div class="t" style="left:187px;transform-origin:0 50%;top:291.18px;font-size:7.7px;line-height:8.85px;color:#101010;transform:scaleX(0.8734);">Upravit</div>
<svg class="a" style="left:224px;top:271.5px;" width="15" height="17" viewBox="0 0 15 17"><g opacity="0.5"><path d="M0.5 0.5H8L11.5 4V15.5H0.5Z" fill="#fff" stroke="#8e939a" stroke-width="0.9"/><path d="M8 0.5V4H11.5" fill="none" stroke="#8e939a" stroke-width="0.9"/><circle cx="11" cy="13" r="3.8" fill="#e66a6a"/><path d="M9.6 11.6L12.4 14.4M12.4 11.6L9.6 14.4" stroke="#fff" stroke-width="1.1"/></g></svg>
<div class="t" style="left:218.5px;transform-origin:0 50%;top:291.18px;font-size:7.7px;line-height:8.85px;color:#a9b0ba;transform:scaleX(0.8627);">Odebrat</div>
<div class="t" style="left:211.5px;transform-origin:0 50%;top:298.18px;font-size:7.7px;line-height:8.85px;color:#a9b0ba;transform:scaleX(0.8425);">ostatní práce</div>
<div class="a" style="left:252px;top:271px;width:1px;height:41px;background:#d5dde9;"></div>
<svg class="a" style="left:261.7px;top:271.1px;" width="12.4" height="19.4" viewBox="0 0 12.4 19.4"><g opacity="0.9"><circle cx="6.2" cy="6.2" r="5.2" fill="#a8dca8"/><path d="M6.2 4.2V16.4" stroke="#3c9a4c" stroke-width="1.3"/><path d="M3.7 14.4L6.2 17.9L8.7 14.4Z" fill="#3c9a4c"/></g></svg>
<div class="t" style="left:256.5px;transform-origin:0 50%;top:291.18px;font-size:7.7px;line-height:8.85px;color:#101010;transform:scaleX(0.8817);">Uzavřít</div>
<div class="t" style="left:255.4px;transform-origin:0 50%;top:298.18px;font-size:7.7px;line-height:8.85px;color:#101010;transform:scaleX(0.8620);">číselník</div>
<svg class="a" style="left:278.5px;top:300.5px;" width="4" height="3" viewBox="0 0 4 3"><path d="M0 0H4L2 2.5Z" fill="#222"/></svg>
<div class="a" style="left:285px;top:271px;width:1px;height:41px;background:#d5dde9;"></div>
<div class="t" style="left:289px;transform-origin:0 50%;top:271.98px;font-size:7.7px;line-height:8.85px;color:#101010;transform:scaleX(0.8280);">Vyhledat sazby</div>
<svg class="a" style="left:338px;top:274.4px;" width="4" height="3" viewBox="0 0 4 3"><path d="M0 0H4L2 2.5Z" fill="#222"/></svg>
<div class="a" style="left:345px;top:271px;width:1px;height:41px;background:#d5dde9;"></div>
<div class="t" style="left:236px;transform-origin:0 50%;top:307.58px;font-size:7.7px;line-height:8.85px;color:#a9b0ba;transform:scaleX(0.8836);">Další</div>
<div class="t" style="left:63.7px;transform-origin:0 50%;top:319.18px;font-size:7.7px;line-height:8.85px;color:#101010;transform:scaleX(0.8433);">Detail</div>
<div class="a" style="left:83px;top:322.5px;width:612px;height:1px;background:#e2e7ee;"></div>
<div class="t" style="left:64.6px;transform-origin:0 50%;top:336.38px;font-size:7.7px;line-height:8.85px;color:#101010;transform:scaleX(0.8189);">Číslo číselníku</div>
<div class="t" style="left:130px;transform-origin:0 50%;top:336.38px;font-size:7.7px;line-height:8.85px;color:#101010;transform:scaleX(0.8377);">Číslo porostu</div>
<div class="t" style="left:195.6px;transform-origin:0 50%;top:336.38px;font-size:7.7px;line-height:8.85px;color:#101010;transform:scaleX(0.7943);">Služba</div>
<div class="t" style="left:222.7px;transform-origin:0 50%;top:336.38px;font-size:7.7px;line-height:8.85px;color:#101010;transform:scaleX(0.8515);">Objem těžby</div>
<div class="t" style="left:288.6px;transform-origin:0 50%;top:336.38px;font-size:7.7px;line-height:8.85px;color:#101010;transform:scaleX(0.8402);">Nákl těžby</div>
<div class="t" style="left:354.4px;transform-origin:0 50%;top:336.38px;font-size:7.7px;line-height:8.85px;color:#101010;transform:scaleX(0.8552);">Nákl přibliž</div>
<div class="t" style="left:419px;transform-origin:0 50%;top:336.38px;font-size:7.7px;line-height:8.85px;color:#101010;transform:scaleX(0.8584);">Nákl ostatní</div>
<div class="a" style="left:62px;top:345px;width:56.8px;height:13.6px;background:#fff;border:1px solid #c6c9cd;box-sizing:border-box;"></div>
<div class="a" style="left:127.5px;top:345px;width:57.099999999999994px;height:13.6px;background:#fff;border:1px solid #c6c9cd;box-sizing:border-box;"></div>
<div class="a" style="left:220.4px;top:345px;width:57.29999999999998px;height:13.6px;background:#fff;border:1px solid #c6c9cd;box-sizing:border-box;"></div>
<div class="a" style="left:285.8px;top:345px;width:56.80000000000001px;height:13.6px;background:#fff;border:1px solid #c6c9cd;box-sizing:border-box;"></div>
<div class="a" style="left:351.5px;top:345px;width:56.30000000000001px;height:13.6px;background:#fff;border:1px solid #c6c9cd;box-sizing:border-box;"></div>
<div class="a" style="left:416.4px;top:345px;width:57.10000000000002px;height:13.6px;background:#fff;border:1px solid #c6c9cd;box-sizing:border-box;"></div>
<div class="a" style="left:193px;top:349.3px;width:7.8px;height:7.2px;background:#e9e9e9;border:1px solid #c4c4c4;box-sizing:border-box;"></div>
<div class="t" style="left:63.4px;transform-origin:0 50%;top:347.18px;font-size:7.7px;line-height:8.85px;color:#101010;transform:scaleX(0.8642);">0006/21/03</div>
<div class="t" style="left:129px;transform-origin:0 50%;top:347.18px;font-size:7.7px;line-height:8.85px;color:#101010;transform:scaleX(0.8022);">451C5</div>
<div class="t" style="right:869px;transform-origin:100% 50%;top:347.58px;font-size:7.7px;line-height:8.85px;color:#101010;transform:scaleX(0.8201);">12,00</div>
<div class="t" style="right:804px;transform-origin:100% 50%;top:347.58px;font-size:7.7px;line-height:8.85px;color:#101010;transform:scaleX(0.8242);">2 160,00</div>
<div class="t" style="right:738.5px;transform-origin:100% 50%;top:347.58px;font-size:7.7px;line-height:8.85px;color:#101010;transform:scaleX(0.8275);">3 360,00</div>
<div class="a" style="left:62px;top:380px;width:634px;height:180px;background:#fff;border:1px solid #d6d6d6;border-radius:0 0 2px 2px;box-sizing:border-box;"></div>
<div class="a" style="left:93.8px;top:368.5px;width:21px;height:12px;background:#eeeeee;border:1px solid #c9c9c9;box-sizing:border-box;"></div>
<div class="a" style="left:62.9px;top:366.8px;width:31px;height:14.2px;background:#fff;border:1px solid #c9c9c9;border-bottom:none;box-sizing:border-box;"></div>
<div class="t" style="left:66.4px;transform-origin:0 50%;top:369.98px;font-size:7.7px;line-height:8.85px;color:#101010;transform:scaleX(0.8340);">Náklady</div>
<div class="t" style="left:96px;transform-origin:0 50%;top:370.88px;font-size:7.7px;line-height:8.85px;color:#101010;transform:scaleX(0.8203);">Sklad</div>
<div class="a" style="left:63.4px;top:381px;width:631.6px;height:162.5px;background:#efefef;border:1px solid #c8d3e0;box-sizing:border-box;"></div>
<div class="a" style="left:64.4px;top:381.5px;width:629.6px;height:13.5px;background:linear-gradient(#fafafa,#eeeeee);"></div>
<div class="a" style="left:124.2px;top:381.5px;width:1px;height:13.5px;background:#dedede;"></div>
<div class="a" style="left:215.1px;top:381.5px;width:1px;height:13.5px;background:#dedede;"></div>
<div class="a" style="left:245.8px;top:381.5px;width:1px;height:13.5px;background:#dedede;"></div>
<div class="a" style="left:302.3px;top:381.5px;width:1px;height:13.5px;background:#dedede;"></div>
<div class="a" style="left:375.5px;top:381.5px;width:1px;height:13.5px;background:#dedede;"></div>
<div class="a" style="left:437.9px;top:381.5px;width:1px;height:13.5px;background:#dedede;"></div>
<div class="a" style="left:468.2px;top:381.5px;width:1px;height:13.5px;background:#dedede;"></div>
<div class="a" style="left:504.5px;top:381.5px;width:1px;height:13.5px;background:#dedede;"></div>
<div class="a" style="left:573.7px;top:381.5px;width:1px;height:13.5px;background:#dedede;"></div>
<div class="a" style="left:629.0px;top:381.5px;width:1px;height:13.5px;background:#dedede;"></div>
<div class="t" style="left:69.9px;transform-origin:0 50%;top:385.48px;font-size:7.7px;line-height:8.85px;color:#2a2a2a;transform:scaleX(0.8634);">Obch partner</div>
<svg class="a" style="left:115.3px;top:385.5px;" width="6" height="6.5" viewBox="0 0 6 6.5"><path d="M0 0H6V0.9L3.6 3.2V6.2H2.4V3.2L0 0.9Z" fill="#666"/></svg>
<div class="t" style="left:128px;transform-origin:0 50%;top:385.48px;font-size:7.7px;line-height:8.85px;color:#2a2a2a;transform:scaleX(0.8551);">Název / jméno obch par.</div>
<svg class="a" style="left:205.6px;top:385.5px;" width="6" height="6.5" viewBox="0 0 6 6.5"><path d="M0 0H6V0.9L3.6 3.2V6.2H2.4V3.2L0 0.9Z" fill="#666"/></svg>
<div class="t" style="left:217.8px;transform-origin:0 50%;top:385.48px;font-size:7.7px;line-height:8.85px;color:#2a2a2a;transform:scaleX(0.7792);">IČ</div>
<svg class="a" style="left:237.2px;top:385.5px;" width="6" height="6.5" viewBox="0 0 6 6.5"><path d="M0 0H6V0.9L3.6 3.2V6.2H2.4V3.2L0 0.9Z" fill="#666"/></svg>
<div class="t" style="left:249.6px;transform-origin:0 50%;top:385.48px;font-size:7.7px;line-height:8.85px;color:#2a2a2a;transform:scaleX(0.8258);">Náz. činnosti</div>
<svg class="a" style="left:293.6px;top:385.5px;" width="6" height="6.5" viewBox="0 0 6 6.5"><path d="M0 0H6V0.9L3.6 3.2V6.2H2.4V3.2L0 0.9Z" fill="#666"/></svg>
<div class="t" style="left:305.7px;transform-origin:0 50%;top:385.48px;font-size:7.7px;line-height:8.85px;color:#2a2a2a;transform:scaleX(0.8373);">Technologie název</div>
<svg class="a" style="left:366.8px;top:385.5px;" width="6" height="6.5" viewBox="0 0 6 6.5"><path d="M0 0H6V0.9L3.6 3.2V6.2H2.4V3.2L0 0.9Z" fill="#666"/></svg>
<div class="t" style="left:378.6px;transform-origin:0 50%;top:385.48px;font-size:7.7px;line-height:8.85px;color:#2a2a2a;transform:scaleX(0.8324);">Skupina dřevin</div>
<svg class="a" style="left:429px;top:385.5px;" width="6" height="6.5" viewBox="0 0 6 6.5"><path d="M0 0H6V0.9L3.6 3.2V6.2H2.4V3.2L0 0.9Z" fill="#666"/></svg>
<div class="t" style="left:440.9px;transform-origin:0 50%;top:385.48px;font-size:7.7px;line-height:8.85px;color:#2a2a2a;transform:scaleX(0.8351);">Hm</div>
<svg class="a" style="left:459px;top:385.5px;" width="6" height="6.5" viewBox="0 0 6 6.5"><path d="M0 0H6V0.9L3.6 3.2V6.2H2.4V3.2L0 0.9Z" fill="#666"/></svg>
<div class="t" style="left:471.4px;transform-origin:0 50%;top:385.48px;font-size:7.7px;line-height:8.85px;color:#2a2a2a;transform:scaleX(0.7604);">Sazba</div>
<svg class="a" style="left:495.7px;top:385.5px;" width="6" height="6.5" viewBox="0 0 6 6.5"><path d="M0 0H6V0.9L3.6 3.2V6.2H2.4V3.2L0 0.9Z" fill="#666"/></svg>
<div class="t" style="left:507.5px;transform-origin:0 50%;top:385.48px;font-size:7.7px;line-height:8.85px;color:#2a2a2a;transform:scaleX(0.8357);">Příplatek (Kč/m3)</div>
<svg class="a" style="left:564.3px;top:385.5px;" width="6" height="6.5" viewBox="0 0 6 6.5"><path d="M0 0H6V0.9L3.6 3.2V6.2H2.4V3.2L0 0.9Z" fill="#666"/></svg>
<div class="t" style="left:576.7px;transform-origin:0 50%;top:385.48px;font-size:7.7px;line-height:8.85px;color:#2a2a2a;transform:scaleX(0.8135);">Příplatek (%)</div>
<svg class="a" style="left:620px;top:385.5px;" width="6" height="6.5" viewBox="0 0 6 6.5"><path d="M0 0H6V0.9L3.6 3.2V6.2H2.4V3.2L0 0.9Z" fill="#666"/></svg>
<div class="t" style="left:632.7px;transform-origin:0 50%;top:385.48px;font-size:7.7px;line-height:8.85px;color:#2a2a2a;transform:scaleX(0.9701);">Objem</div>
<svg class="a" style="left:677px;top:385.5px;" width="6" height="6.5" viewBox="0 0 6 6.5"><path d="M0 0H6V0.9L3.6 3.2V6.2H2.4V3.2L0 0.9Z" fill="#666"/></svg>
<div class="a" style="left:64.4px;top:395px;width:629.6px;height:16.19999999999999px;background:#ffffff;"></div>
<div class="t" style="left:68.2px;transform-origin:0 50%;top:400.18px;font-size:7.7px;line-height:8.85px;color:#1a1a1a;transform:scaleX(0.8182);">1</div>
<div class="t" style="left:126.0px;transform-origin:0 50%;top:400.18px;font-size:7.7px;line-height:8.85px;color:#1a1a1a;transform:scaleX(0.8182);">Lesma s.r.o.</div>
<div class="t" style="left:216.6px;transform-origin:0 50%;top:400.18px;font-size:7.7px;line-height:8.85px;color:#1a1a1a;transform:scaleX(0.8466);">64613186</div>
<div class="t" style="left:247.60000000000002px;transform-origin:0 50%;top:400.18px;font-size:7.7px;line-height:8.85px;color:#1a1a1a;transform:scaleX(0.8182);">Přibližování</div>
<div class="t" style="left:304.1px;transform-origin:0 50%;top:400.18px;font-size:7.7px;line-height:8.85px;color:#1a1a1a;transform:scaleX(0.8182);">Kůň P-VM</div>
<div class="t" style="left:377.3px;transform-origin:0 50%;top:400.18px;font-size:7.7px;line-height:8.85px;color:#1a1a1a;transform:scaleX(0.8182);">Smrk, jedle</div>
<div class="t" style="left:439.7px;transform-origin:0 50%;top:400.18px;font-size:7.7px;line-height:8.85px;color:#1a1a1a;transform:scaleX(0.8182);">Do 0,99</div>
<div class="t" style="right:641.5px;transform-origin:100% 50%;top:400.18px;font-size:7.7px;line-height:8.85px;color:#1a1a1a;transform:scaleX(0.8182);">140,00</div>
<div class="a" style="left:64.4px;top:410.2px;width:629.6px;height:1.2px;background:#2e2e2e;"></div>
<div class="a" style="left:64.4px;top:411.2px;width:629.6px;height:16.100000000000023px;background:#ffffff;"></div>
<div class="t" style="left:68.2px;transform-origin:0 50%;top:416.38px;font-size:7.7px;line-height:8.85px;color:#1a1a1a;transform:scaleX(0.8182);">00000</div>
<div class="t" style="left:126.0px;transform-origin:0 50%;top:416.38px;font-size:7.7px;line-height:8.85px;color:#1a1a1a;transform:scaleX(0.8182);">Moje firma</div>
<div class="t" style="left:216.6px;transform-origin:0 50%;top:416.38px;font-size:7.7px;line-height:8.85px;color:#1a1a1a;transform:scaleX(0.8609);">11223344</div>
<div class="t" style="left:247.60000000000002px;transform-origin:0 50%;top:416.38px;font-size:7.7px;line-height:8.85px;color:#1a1a1a;transform:scaleX(0.8182);">Přibližování</div>
<div class="t" style="left:304.1px;transform-origin:0 50%;top:416.38px;font-size:7.7px;line-height:8.85px;color:#1a1a1a;transform:scaleX(0.8182);">UKT VM-OM</div>
<div class="t" style="left:377.3px;transform-origin:0 50%;top:416.38px;font-size:7.7px;line-height:8.85px;color:#1a1a1a;transform:scaleX(0.8182);">Smrk, jedle</div>
<div class="t" style="left:439.7px;transform-origin:0 50%;top:416.38px;font-size:7.7px;line-height:8.85px;color:#1a1a1a;transform:scaleX(0.8182);">Do 0,99</div>
<div class="t" style="right:641.5px;transform-origin:100% 50%;top:416.38px;font-size:7.7px;line-height:8.85px;color:#1a1a1a;transform:scaleX(0.8182);">105,00</div>
<div class="t" style="right:572.3px;transform-origin:100% 50%;top:416.38px;font-size:7.7px;line-height:8.85px;color:#1a1a1a;transform:scaleX(0.8182);">35,00</div>
<div class="a" style="left:64.4px;top:426.3px;width:629.6px;height:1.2px;background:#2e2e2e;"></div>
<div class="a" style="left:64.4px;top:427.3px;width:629.6px;height:16.5px;background:#f08080;"></div>
<div class="t" style="left:68.2px;transform-origin:0 50%;top:432.48px;font-size:7.7px;line-height:8.85px;color:#ffffff;transform:scaleX(0.8182);">00000</div>
<div class="t" style="left:126.0px;transform-origin:0 50%;top:432.48px;font-size:7.7px;line-height:8.85px;color:#ffffff;transform:scaleX(0.8182);">Moje firma</div>
<div class="t" style="left:216.6px;transform-origin:0 50%;top:432.48px;font-size:7.7px;line-height:8.85px;color:#ffffff;transform:scaleX(0.8609);">11223344</div>
<div class="t" style="left:247.60000000000002px;transform-origin:0 50%;top:432.48px;font-size:7.7px;line-height:8.85px;color:#ffffff;transform:scaleX(0.8182);">Těžba</div>
<div class="t" style="left:304.1px;transform-origin:0 50%;top:432.48px;font-size:7.7px;line-height:8.85px;color:#ffffff;transform:scaleX(0.8182);">JMP</div>
<div class="t" style="left:377.3px;transform-origin:0 50%;top:432.48px;font-size:7.7px;line-height:8.85px;color:#ffffff;transform:scaleX(0.8182);">Smrk, jedle</div>
<div class="t" style="left:439.7px;transform-origin:0 50%;top:432.48px;font-size:7.7px;line-height:8.85px;color:#ffffff;transform:scaleX(0.8182);">Do 0,99</div>
<div class="t" style="right:641.5px;transform-origin:100% 50%;top:432.48px;font-size:7.7px;line-height:8.85px;color:#ffffff;transform:scaleX(0.8182);">180,00</div>
<div class="a" style="left:64.4px;top:442.8px;width:629.6px;height:1.2px;background:#2e2e2e;"></div>
<div class="a" style="left:124.10000000000001px;top:395px;width:1.1px;height:48.80000000000001px;background:#2a2a2a;"></div>
<div class="a" style="left:215.0px;top:395px;width:1.1px;height:48.80000000000001px;background:#2a2a2a;"></div>
<div class="a" style="left:245.70000000000002px;top:395px;width:1.1px;height:48.80000000000001px;background:#2a2a2a;"></div>
<div class="a" style="left:302.2px;top:395px;width:1.1px;height:48.80000000000001px;background:#2a2a2a;"></div>
<div class="a" style="left:375.4px;top:395px;width:1.1px;height:48.80000000000001px;background:#2a2a2a;"></div>
<div class="a" style="left:437.79999999999995px;top:395px;width:1.1px;height:48.80000000000001px;background:#2a2a2a;"></div>
<div class="a" style="left:468.09999999999997px;top:395px;width:1.1px;height:48.80000000000001px;background:#2a2a2a;"></div>
<div class="a" style="left:504.4px;top:395px;width:1.1px;height:48.80000000000001px;background:#2a2a2a;"></div>
<div class="a" style="left:573.6px;top:395px;width:1.1px;height:48.80000000000001px;background:#2a2a2a;"></div>
<div class="a" style="left:628.9px;top:395px;width:1.1px;height:48.80000000000001px;background:#2a2a2a;"></div>
<div class="a" style="left:64.4px;top:395px;width:2.5px;height:48.8px;background:#f4f6f9;"></div>
<div class="a" style="left:66.4px;top:395px;width:0.8px;height:48.80000000000001px;background:#d8e2ee;"></div>
<svg class="a" style="left:70.5px;top:536px;" width="4" height="5" viewBox="0 0 4 5"><path d="M3.2 0.5L0.8 2.5L3.2 4.5" fill="none" stroke="#c8c8c8" stroke-width="0.7"/></svg>
<div class="a" style="left:63px;top:543.5px;width:633px;height:15.5px;background:#fff;"></div>
<div class="a" style="left:63px;top:543.5px;width:633px;height:1px;background:#c8d3e0;"></div>
<div class="t" style="left:66px;transform-origin:0 50%;top:547.78px;font-size:7.7px;line-height:8.85px;color:#101010;transform:scaleX(0.8426);">Počet 3</div>
<div class="t" style="left:123px;transform-origin:0 50%;top:547.78px;font-size:7.7px;line-height:8.85px;color:#101010;transform:scaleX(0.9874);">Filtrovaný počet 3</div>
<div class="a" style="left:59px;top:561px;width:640px;height:15px;background:#f1efee;"></div>
<div class="t" style="left:632px;transform-origin:0 50%;top:565.88px;font-size:7.7px;line-height:8.85px;color:#101010;transform:scaleX(0.8182);">Lupa: 100%</div>
<div class="a" style="left:646px;top:203px;width:499px;height:415px;background:#fff;border:1px solid #858585;box-sizing:border-box;"></div>
<svg class="a" style="left:650.6px;top:207px;" width="8.5" height="8.5" viewBox="0 0 8.5 8.5"><rect x="0" y="0" width="8.5" height="8.5" fill="#0b7a2c"/><circle cx="6.800000000000001" cy="1.7000000000000002" r="1.02" fill="#f07020"/><path d="M1.70 5.36 L2.97 7.91 L0.43 7.91Z" fill="#f4fbf4"/><path d="M4.25 2.55 L5.53 5.10 L2.97 5.10Z" fill="#f4fbf4"/><path d="M4.25 5.36 L5.53 7.91 L2.97 7.91Z" fill="#f4fbf4"/><path d="M6.80 2.55 L8.08 5.10 L5.53 5.10Z" fill="#f4fbf4"/><path d="M6.80 5.36 L8.08 7.91 L5.53 7.91Z" fill="#f4fbf4"/></svg>
<div class="t" style="left:661.9px;transform-origin:0 50%;top:208.62px;font-size:7.26px;line-height:8.35px;color:#101010;transform:scaleX(0.7885);">Správa sazeb</div>
<svg class="a" style="left:1129.1000000000001px;top:207.7px;" width="6.6" height="6.6" viewBox="0 0 6.6 6.6"><path d="M0.5 0.5L6.1 6.1M6.1 0.5L0.5 6.1" stroke="#2b2b2b" stroke-width="0.9"/></svg>
<svg class="a" style="left:1104.9px;top:207.7px;" width="6.6" height="6.6" viewBox="0 0 6.6 6.6"><rect x="0.5" y="0.5" width="5.6" height="5.6" fill="none" stroke="#2b2b2b" stroke-width="1"/></svg>
<svg class="a" style="left:1081.2px;top:210.5px;" width="6.6" height="2" viewBox="0 0 6.6 2"><rect x="0" y="0" width="5.6" height="1" fill="#cfcfcf"/></svg>
<div class="a" style="left:647.5px;top:219.5px;width:497px;height:12.8px;background:#dfe7f2;"></div>
<div class="a" style="left:647.5px;top:219.9px;width:28px;height:11.8px;background:linear-gradient(#7098dc,#3564bd 45%,#2352aa 60%,#3a6ac4);border-radius:2px 2px 0 0;"></div>
<svg class="a" style="left:653.5px;top:220.8px;" width="10" height="10" viewBox="0 0 10 10"><rect x="0" y="0" width="10" height="10" fill="#0b7a2c"/><circle cx="8.0" cy="2.0" r="1.2" fill="#f07020"/><path d="M2.00 6.30 L3.50 9.30 L0.50 9.30Z" fill="#f4fbf4"/><path d="M5.00 3.00 L6.50 6.00 L3.50 6.00Z" fill="#f4fbf4"/><path d="M5.00 6.30 L6.50 9.30 L3.50 9.30Z" fill="#f4fbf4"/><path d="M8.00 3.00 L9.50 6.00 L6.50 6.00Z" fill="#f4fbf4"/><path d="M8.00 6.30 L9.50 9.30 L6.50 9.30Z" fill="#f4fbf4"/></svg>
<svg class="a" style="left:665.0px;top:224.3px;" width="6" height="4" viewBox="0 0 6 4"><path d="M0 0H6L3 3.5Z" fill="#fff"/></svg>
<div class="a" style="left:677.7px;top:220.9px;width:23.6px;height:11.4px;background:linear-gradient(#fff,#f8fafd);border:1px solid #d5deea;border-bottom:none;box-sizing:border-box;"></div>
<div class="t" style="left:669.5px;width:40px;text-align:center;transform-origin:50% 50%;top:224.12px;font-size:7.26px;line-height:8.35px;color:#262626;transform:scaleX(0.9456);">Data</div>
<div class="t" style="left:710px;transform-origin:0 50%;top:224.32px;font-size:7.26px;line-height:8.35px;color:#262626;transform:scaleX(0.8521);">Nápověda</div>
<svg class="a" style="left:1133.6000000000001px;top:220.70000000000002px;" width="9.2" height="9.2" viewBox="0 0 9.2 9.2"><circle cx="4.6" cy="4.6" r="4.6" fill="#7fadf0"/><text x="4.6" y="7.199999999999999" font-size="6.4399999999999995" text-anchor="middle" fill="#e8f0ff" font-family="Liberation Sans">?</text></svg>
<div class="a" style="left:647.5px;top:232.3px;width:496.5px;height:47.5px;background:linear-gradient(#fdfdfe,#f1f4fa 35%,#ecf0f8 60%,#ebeff7);"></div>
<div class="a" style="left:647.5px;top:278.8px;width:496.5px;height:1px;background:#c4d1e3;"></div>
<svg class="a" style="left:654.2px;top:235.8px;" width="16" height="16" viewBox="0 0 16 16"><circle cx="8" cy="8" r="8" fill="#a6d9a6"/><path d="M4.00 8.00L7.04 11.04L12.40 4.96" fill="none" stroke="#fff" stroke-width="1.76"/></svg>
<div class="a" style="left:677.2px;top:236.4px;width:15.699999999999932px;height:15.099999999999994px;box-sizing:border-box;border:1px solid #97a6ba;border-bottom:2px solid #8796aa;border-radius:2px;background:linear-gradient(#e6ebf2,#cfd7e2);"></div>
<div class="t" style="left:670.05px;width:30px;text-align:center;transform-origin:50% 50%;top:240.73px;font-size:6.98px;line-height:8.03px;color:#4a4a4a;transform:scaleX(0.9985);">Esc</div>
<div class="t" style="left:647.2px;width:30px;text-align:center;transform-origin:50% 50%;top:254.62px;font-size:7.26px;line-height:8.35px;color:#101010;transform:scaleX(0.8624);">Ok</div>
<div class="t" style="left:665.0px;width:40px;text-align:center;transform-origin:50% 50%;top:254.62px;font-size:7.26px;line-height:8.35px;color:#101010;transform:scaleX(0.8355);">Zavřít</div>
<svg class="a" style="left:702.4px;top:237px;" width="14" height="14" viewBox="0 0 14 14"><g opacity="0.45"><rect x="3.08" y="0.5" width="7.840000000000001" height="4.8999999999999995" fill="#fff" stroke="#6fa0e0" stroke-width="1"/><rect x="0.5" y="4.2" width="13" height="5.88" rx="2" fill="#a9c8f0" stroke="#6fa0e0" stroke-width="1"/><rect x="3.08" y="7.700000000000001" width="7.840000000000001" height="6.02" fill="#fff" stroke="#6fa0e0" stroke-width="1"/><path d="M4.48 10.08H9.520000000000001M4.48 11.9H9.520000000000001" stroke="#6fa0e0" stroke-width="0.8"/></g></svg>
<div class="t" style="left:694.4px;width:30px;text-align:center;transform-origin:50% 50%;top:254.62px;font-size:7.26px;line-height:8.35px;color:#a9b0ba;transform:scaleX(0.7670);">Tisk</div>
<div class="a" style="left:697px;top:235px;width:1px;height:41px;background:#d5dde9;"></div>
<div class="a" style="left:723px;top:235px;width:1px;height:41px;background:#d5dde9;"></div>
<div class="a" style="left:773px;top:235px;width:1px;height:41px;background:#d5dde9;"></div>
<div class="t" style="left:729.8px;transform-origin:0 50%;top:236.52px;font-size:7.26px;line-height:8.35px;color:#101010;transform:scaleX(0.8536);">Doplnit sazby</div>
<div class="t" style="left:729.8px;transform-origin:0 50%;top:245.82px;font-size:7.26px;line-height:8.35px;color:#101010;transform:scaleX(0.8159);">Smazat sazby</div>
<div class="t" style="left:665.8px;width:40px;text-align:center;transform-origin:50% 50%;top:270.82px;font-size:7.26px;line-height:8.35px;color:#a9b0ba;transform:scaleX(0.8125);">Uložení</div>
<div class="t" style="left:728.6px;width:40px;text-align:center;transform-origin:50% 50%;top:270.82px;font-size:7.26px;line-height:8.35px;color:#a9b0ba;transform:scaleX(0.8464);">Další</div>
<div class="t" style="left:651.5px;transform-origin:0 50%;top:281.82px;font-size:7.26px;line-height:8.35px;color:#101010;transform:scaleX(0.8620);">Detail</div>
<div class="a" style="left:669px;top:285px;width:471px;height:1px;background:#e2e7ee;"></div>
<div class="t" style="left:652.3px;transform-origin:0 50%;top:298.32px;font-size:7.26px;line-height:8.35px;color:#101010;transform:scaleX(0.8726);">Obchodní partner</div>
<div class="a" style="left:649.9px;top:306.3px;width:106.9px;height:13.5px;background:linear-gradient(#efefef,#e3e3e3);border:1px solid #c3c3c3;box-sizing:border-box;"></div>
<div class="t" style="left:652.8px;transform-origin:0 50%;top:309.42px;font-size:7.26px;line-height:8.35px;color:#101010;transform:scaleX(0.8669);">00000</div>
<div class="t" style="left:700.9px;transform-origin:0 50%;top:309.42px;font-size:7.26px;line-height:8.35px;color:#101010;transform:scaleX(0.8736);">Moje firma</div>
<svg class="a" style="left:749.4px;top:311.3px;" width="5" height="3" viewBox="0 0 5 3"><path d="M0.3 0.3L2.5 2.5L4.7 0.3" fill="none" stroke="#666" stroke-width="0.9"/></svg>
<div class="t" style="left:652.6px;transform-origin:0 50%;top:331.62px;font-size:7.26px;line-height:8.35px;color:#101010;transform:scaleX(0.8491);">Technologie</div>
<div class="t" style="left:725.8px;transform-origin:0 50%;top:331.62px;font-size:7.26px;line-height:8.35px;color:#101010;transform:scaleX(0.8081);">Skupina</div>
<div class="t" style="left:788px;transform-origin:0 50%;top:331.42px;font-size:7.26px;line-height:8.35px;color:#101010;transform:scaleX(0.8364);">9</div>
<div class="t" style="left:833px;transform-origin:0 50%;top:331.42px;font-size:7.26px;line-height:8.35px;color:#101010;transform:scaleX(0.8364);">14</div>
<div class="t" style="left:877.5px;transform-origin:0 50%;top:331.42px;font-size:7.26px;line-height:8.35px;color:#101010;transform:scaleX(0.8364);">19</div>
<div class="t" style="left:921.5px;transform-origin:0 50%;top:331.42px;font-size:7.26px;line-height:8.35px;color:#101010;transform:scaleX(0.8364);">29</div>
<div class="t" style="left:965.9px;transform-origin:0 50%;top:331.42px;font-size:7.26px;line-height:8.35px;color:#101010;transform:scaleX(0.8364);">49</div>
<div class="t" style="left:1010px;transform-origin:0 50%;top:331.42px;font-size:7.26px;line-height:8.35px;color:#101010;transform:scaleX(0.8364);">69</div>
<div class="t" style="left:1054.4px;transform-origin:0 50%;top:331.42px;font-size:7.26px;line-height:8.35px;color:#101010;transform:scaleX(0.8364);">99</div>
<div class="t" style="left:1099.5px;transform-origin:0 50%;top:331.42px;font-size:7.26px;line-height:8.35px;color:#101010;transform:scaleX(0.8364);">100</div>
<div class="a" style="left:647.5px;top:338px;width:485px;height:263px;overflow:hidden;">
<div class="a" style="left:2.3999999999999773px;top:2.1999999999999886px;width:62.9px;height:12.6px;background:#fff;border:1px solid #c6c6c6;box-sizing:border-box;"></div>
<div class="a" style="left:72.70000000000005px;top:2.1999999999999886px;width:47.4px;height:12.6px;background:#fff;border:1px solid #c6c6c6;box-sizing:border-box;"></div>
<div class="t" style="left:3.5px;transform-origin:0 50%;top:4.22px;font-size:7.26px;line-height:8.35px;color:#101010;transform:scaleX(0.8364);">01 JMP</div>
<div class="t" style="left:74.10000000000002px;transform-origin:0 50%;top:4.22px;font-size:7.26px;line-height:8.35px;color:#101010;transform:scaleX(0.8364);">Smrk, jedle</div>
<div class="a" style="left:127.89999999999998px;top:2.1999999999999886px;width:36.6px;height:12.6px;background:#fff;border:1px solid #c6c6c6;box-sizing:border-box;"></div>
<div class="t" style="right:982.1px;transform-origin:100% 50%;top:5.62px;font-size:7.26px;line-height:8.35px;color:#101010;transform:scaleX(0.8364);right:auto;left:87.89999999999998px;width:75px;text-align:right;">550,00</div>
<div class="a" style="left:172.39999999999998px;top:2.1999999999999886px;width:36.6px;height:12.6px;background:#fff;border:1px solid #c6c6c6;box-sizing:border-box;"></div>
<div class="t" style="right:937.6px;transform-origin:100% 50%;top:5.62px;font-size:7.26px;line-height:8.35px;color:#101010;transform:scaleX(0.8364);right:auto;left:132.39999999999998px;width:75px;text-align:right;">440,00</div>
<div class="a" style="left:216.89999999999998px;top:2.1999999999999886px;width:36.6px;height:12.6px;background:#fff;border:1px solid #c6c6c6;box-sizing:border-box;"></div>
<div class="t" style="right:893.1px;transform-origin:100% 50%;top:5.62px;font-size:7.26px;line-height:8.35px;color:#101010;transform:scaleX(0.8364);right:auto;left:176.89999999999998px;width:75px;text-align:right;">350,00</div>
<div class="a" style="left:261.4px;top:2.1999999999999886px;width:36.6px;height:12.6px;background:#fff;border:1px solid #c6c6c6;box-sizing:border-box;"></div>
<div class="t" style="right:848.6px;transform-origin:100% 50%;top:5.62px;font-size:7.26px;line-height:8.35px;color:#101010;transform:scaleX(0.8364);right:auto;left:221.39999999999998px;width:75px;text-align:right;">290,00</div>
<div class="a" style="left:305.9px;top:2.1999999999999886px;width:36.6px;height:12.6px;background:#fff;border:1px solid #c6c6c6;box-sizing:border-box;"></div>
<div class="t" style="right:804.1px;transform-origin:100% 50%;top:5.62px;font-size:7.26px;line-height:8.35px;color:#101010;transform:scaleX(0.8364);right:auto;left:265.9px;width:75px;text-align:right;">250,00</div>
<div class="a" style="left:350.4px;top:2.1999999999999886px;width:36.6px;height:12.6px;background:#fff;border:1px solid #c6c6c6;box-sizing:border-box;"></div>
<div class="t" style="right:759.6px;transform-origin:100% 50%;top:5.62px;font-size:7.26px;line-height:8.35px;color:#101010;transform:scaleX(0.8364);right:auto;left:310.4px;width:75px;text-align:right;">210,00</div>
<div class="a" style="left:394.9000000000001px;top:2.1999999999999886px;width:36.6px;height:12.6px;background:#fff;border:1px solid #c6c6c6;box-sizing:border-box;"></div>
<div class="t" style="right:715.0999999999999px;transform-origin:100% 50%;top:5.62px;font-size:7.26px;line-height:8.35px;color:#101010;transform:scaleX(0.8364);right:auto;left:354.9000000000001px;width:75px;text-align:right;">180,00</div>
<div class="a" style="left:439.4000000000001px;top:2.1999999999999886px;width:36.6px;height:12.6px;background:#fff;border:1px solid #c6c6c6;box-sizing:border-box;"></div>
<div class="t" style="right:670.5999999999999px;transform-origin:100% 50%;top:5.62px;font-size:7.26px;line-height:8.35px;color:#101010;transform:scaleX(0.8364);right:auto;left:399.4000000000001px;width:75px;text-align:right;">150,00</div>
<div class="a" style="left:2.3999999999999773px;top:18.49999999999999px;width:483px;height:2px;background:#dcdcdc;"></div>
<div class="a" style="left:2.3999999999999773px;top:22.55000000000001px;width:62.9px;height:12.6px;background:#fff;border:1px solid #c6c6c6;box-sizing:border-box;"></div>
<div class="a" style="left:72.70000000000005px;top:22.55000000000001px;width:47.4px;height:12.6px;background:#fff;border:1px solid #c6c6c6;box-sizing:border-box;"></div>
<div class="t" style="left:3.5px;transform-origin:0 50%;top:24.57px;font-size:7.26px;line-height:8.35px;color:#101010;transform:scaleX(0.8364);">01 JMP</div>
<div class="t" style="left:74.10000000000002px;transform-origin:0 50%;top:24.57px;font-size:7.26px;line-height:8.35px;color:#101010;transform:scaleX(0.8364);">Borovice</div>
<div class="a" style="left:127.89999999999998px;top:22.55000000000001px;width:36.6px;height:12.6px;background:#fff;border:1px solid #c6c6c6;box-sizing:border-box;"></div>
<div class="t" style="right:982.1px;transform-origin:100% 50%;top:25.97px;font-size:7.26px;line-height:8.35px;color:#101010;transform:scaleX(0.8364);right:auto;left:87.89999999999998px;width:75px;text-align:right;">560,00</div>
<div class="a" style="left:172.39999999999998px;top:22.55000000000001px;width:36.6px;height:12.6px;background:#fff;border:1px solid #c6c6c6;box-sizing:border-box;"></div>
<div class="t" style="right:937.6px;transform-origin:100% 50%;top:25.97px;font-size:7.26px;line-height:8.35px;color:#101010;transform:scaleX(0.8364);right:auto;left:132.39999999999998px;width:75px;text-align:right;">440,00</div>
<div class="a" style="left:216.89999999999998px;top:22.55000000000001px;width:36.6px;height:12.6px;background:#fff;border:1px solid #c6c6c6;box-sizing:border-box;"></div>
<div class="t" style="right:893.1px;transform-origin:100% 50%;top:25.97px;font-size:7.26px;line-height:8.35px;color:#101010;transform:scaleX(0.8364);right:auto;left:176.89999999999998px;width:75px;text-align:right;">440,00</div>
<div class="a" style="left:261.4px;top:22.55000000000001px;width:36.6px;height:12.6px;background:#fff;border:1px solid #c6c6c6;box-sizing:border-box;"></div>
<div class="t" style="right:848.6px;transform-origin:100% 50%;top:25.97px;font-size:7.26px;line-height:8.35px;color:#101010;transform:scaleX(0.8364);right:auto;left:221.39999999999998px;width:75px;text-align:right;">440,00</div>
<div class="a" style="left:305.9px;top:22.55000000000001px;width:36.6px;height:12.6px;background:#fff;border:1px solid #c6c6c6;box-sizing:border-box;"></div>
<div class="t" style="right:804.1px;transform-origin:100% 50%;top:25.97px;font-size:7.26px;line-height:8.35px;color:#101010;transform:scaleX(0.8364);right:auto;left:265.9px;width:75px;text-align:right;">440,00</div>
<div class="a" style="left:350.4px;top:22.55000000000001px;width:36.6px;height:12.6px;background:#fff;border:1px solid #c6c6c6;box-sizing:border-box;"></div>
<div class="t" style="right:759.6px;transform-origin:100% 50%;top:25.97px;font-size:7.26px;line-height:8.35px;color:#101010;transform:scaleX(0.8364);right:auto;left:310.4px;width:75px;text-align:right;">440,00</div>
<div class="a" style="left:394.9000000000001px;top:22.55000000000001px;width:36.6px;height:12.6px;background:#fff;border:1px solid #c6c6c6;box-sizing:border-box;"></div>
<div class="t" style="right:715.0999999999999px;transform-origin:100% 50%;top:25.97px;font-size:7.26px;line-height:8.35px;color:#101010;transform:scaleX(0.8364);right:auto;left:354.9000000000001px;width:75px;text-align:right;">440,00</div>
<div class="a" style="left:439.4000000000001px;top:22.55000000000001px;width:36.6px;height:12.6px;background:#fff;border:1px solid #c6c6c6;box-sizing:border-box;"></div>
<div class="t" style="right:670.5999999999999px;transform-origin:100% 50%;top:25.97px;font-size:7.26px;line-height:8.35px;color:#101010;transform:scaleX(0.8364);right:auto;left:399.4000000000001px;width:75px;text-align:right;">150,00</div>
<div class="a" style="left:2.3999999999999773px;top:38.85000000000001px;width:483px;height:2px;background:#dcdcdc;"></div>
<div class="a" style="left:2.3999999999999773px;top:42.89999999999998px;width:62.9px;height:12.6px;background:#fff;border:1px solid #c6c6c6;box-sizing:border-box;"></div>
<div class="a" style="left:72.70000000000005px;top:42.89999999999998px;width:47.4px;height:12.6px;background:#fff;border:1px solid #c6c6c6;box-sizing:border-box;"></div>
<div class="t" style="left:3.5px;transform-origin:0 50%;top:44.92px;font-size:7.26px;line-height:8.35px;color:#101010;transform:scaleX(0.8364);">01 JMP</div>
<div class="t" style="left:74.10000000000002px;transform-origin:0 50%;top:44.92px;font-size:7.26px;line-height:8.35px;color:#101010;transform:scaleX(0.8364);">Modřín</div>
<div class="a" style="left:127.89999999999998px;top:42.89999999999998px;width:36.6px;height:12.6px;background:#fff;border:1px solid #c6c6c6;box-sizing:border-box;"></div>
<div class="t" style="right:982.1px;transform-origin:100% 50%;top:46.32px;font-size:7.26px;line-height:8.35px;color:#101010;transform:scaleX(0.8364);right:auto;left:87.89999999999998px;width:75px;text-align:right;">560,00</div>
<div class="a" style="left:172.39999999999998px;top:42.89999999999998px;width:36.6px;height:12.6px;background:#fff;border:1px solid #c6c6c6;box-sizing:border-box;"></div>
<div class="t" style="right:937.6px;transform-origin:100% 50%;top:46.32px;font-size:7.26px;line-height:8.35px;color:#101010;transform:scaleX(0.8364);right:auto;left:132.39999999999998px;width:75px;text-align:right;">440,00</div>
<div class="a" style="left:216.89999999999998px;top:42.89999999999998px;width:36.6px;height:12.6px;background:#fff;border:1px solid #c6c6c6;box-sizing:border-box;"></div>
<div class="t" style="right:893.1px;transform-origin:100% 50%;top:46.32px;font-size:7.26px;line-height:8.35px;color:#101010;transform:scaleX(0.8364);right:auto;left:176.89999999999998px;width:75px;text-align:right;">440,00</div>
<div class="a" style="left:261.4px;top:42.89999999999998px;width:36.6px;height:12.6px;background:#fff;border:1px solid #c6c6c6;box-sizing:border-box;"></div>
<div class="t" style="right:848.6px;transform-origin:100% 50%;top:46.32px;font-size:7.26px;line-height:8.35px;color:#101010;transform:scaleX(0.8364);right:auto;left:221.39999999999998px;width:75px;text-align:right;">440,00</div>
<div class="a" style="left:305.9px;top:42.89999999999998px;width:36.6px;height:12.6px;background:#fff;border:1px solid #c6c6c6;box-sizing:border-box;"></div>
<div class="t" style="right:804.1px;transform-origin:100% 50%;top:46.32px;font-size:7.26px;line-height:8.35px;color:#101010;transform:scaleX(0.8364);right:auto;left:265.9px;width:75px;text-align:right;">440,00</div>
<div class="a" style="left:350.4px;top:42.89999999999998px;width:36.6px;height:12.6px;background:#fff;border:1px solid #c6c6c6;box-sizing:border-box;"></div>
<div class="t" style="right:759.6px;transform-origin:100% 50%;top:46.32px;font-size:7.26px;line-height:8.35px;color:#101010;transform:scaleX(0.8364);right:auto;left:310.4px;width:75px;text-align:right;">440,00</div>
<div class="a" style="left:394.9000000000001px;top:42.89999999999998px;width:36.6px;height:12.6px;background:#fff;border:1px solid #c6c6c6;box-sizing:border-box;"></div>
<div class="t" style="right:715.0999999999999px;transform-origin:100% 50%;top:46.32px;font-size:7.26px;line-height:8.35px;color:#101010;transform:scaleX(0.8364);right:auto;left:354.9000000000001px;width:75px;text-align:right;">440,00</div>
<div class="a" style="left:439.4000000000001px;top:42.89999999999998px;width:36.6px;height:12.6px;background:#fff;border:1px solid #c6c6c6;box-sizing:border-box;"></div>
<div class="t" style="right:670.5999999999999px;transform-origin:100% 50%;top:46.32px;font-size:7.26px;line-height:8.35px;color:#101010;transform:scaleX(0.8364);right:auto;left:399.4000000000001px;width:75px;text-align:right;">150,00</div>
<div class="a" style="left:2.3999999999999773px;top:59.199999999999974px;width:483px;height:2px;background:#dcdcdc;"></div>
<div class="a" style="left:2.3999999999999773px;top:63.25px;width:62.9px;height:12.6px;background:#fff;border:1px solid #c6c6c6;box-sizing:border-box;"></div>
<div class="a" style="left:72.70000000000005px;top:63.25px;width:47.4px;height:12.6px;background:#fff;border:1px solid #c6c6c6;box-sizing:border-box;"></div>
<div class="t" style="left:3.5px;transform-origin:0 50%;top:65.27px;font-size:7.26px;line-height:8.35px;color:#101010;transform:scaleX(0.8364);">01 JMP</div>
<div class="t" style="left:74.10000000000002px;transform-origin:0 50%;top:65.27px;font-size:7.26px;line-height:8.35px;color:#101010;transform:scaleX(0.8364);">Listnaté měkké</div>
<div class="a" style="left:127.89999999999998px;top:63.25px;width:36.6px;height:12.6px;background:#fff;border:1px solid #c6c6c6;box-sizing:border-box;"></div>
<div class="t" style="right:982.1px;transform-origin:100% 50%;top:66.67px;font-size:7.26px;line-height:8.35px;color:#101010;transform:scaleX(0.8364);right:auto;left:87.89999999999998px;width:75px;text-align:right;">560,00</div>
<div class="a" style="left:172.39999999999998px;top:63.25px;width:36.6px;height:12.6px;background:#fff;border:1px solid #c6c6c6;box-sizing:border-box;"></div>
<div class="t" style="right:937.6px;transform-origin:100% 50%;top:66.67px;font-size:7.26px;line-height:8.35px;color:#101010;transform:scaleX(0.8364);right:auto;left:132.39999999999998px;width:75px;text-align:right;">440,00</div>
<div class="a" style="left:216.89999999999998px;top:63.25px;width:36.6px;height:12.6px;background:#fff;border:1px solid #c6c6c6;box-sizing:border-box;"></div>
<div class="t" style="right:893.1px;transform-origin:100% 50%;top:66.67px;font-size:7.26px;line-height:8.35px;color:#101010;transform:scaleX(0.8364);right:auto;left:176.89999999999998px;width:75px;text-align:right;">440,00</div>
<div class="a" style="left:261.4px;top:63.25px;width:36.6px;height:12.6px;background:#fff;border:1px solid #c6c6c6;box-sizing:border-box;"></div>
<div class="t" style="right:848.6px;transform-origin:100% 50%;top:66.67px;font-size:7.26px;line-height:8.35px;color:#101010;transform:scaleX(0.8364);right:auto;left:221.39999999999998px;width:75px;text-align:right;">440,00</div>
<div class="a" style="left:305.9px;top:63.25px;width:36.6px;height:12.6px;background:#fff;border:1px solid #c6c6c6;box-sizing:border-box;"></div>
<div class="t" style="right:804.1px;transform-origin:100% 50%;top:66.67px;font-size:7.26px;line-height:8.35px;color:#101010;transform:scaleX(0.8364);right:auto;left:265.9px;width:75px;text-align:right;">440,00</div>
<div class="a" style="left:350.4px;top:63.25px;width:36.6px;height:12.6px;background:#fff;border:1px solid #c6c6c6;box-sizing:border-box;"></div>
<div class="t" style="right:759.6px;transform-origin:100% 50%;top:66.67px;font-size:7.26px;line-height:8.35px;color:#101010;transform:scaleX(0.8364);right:auto;left:310.4px;width:75px;text-align:right;">440,00</div>
<div class="a" style="left:394.9000000000001px;top:63.25px;width:36.6px;height:12.6px;background:#fff;border:1px solid #c6c6c6;box-sizing:border-box;"></div>
<div class="t" style="right:715.0999999999999px;transform-origin:100% 50%;top:66.67px;font-size:7.26px;line-height:8.35px;color:#101010;transform:scaleX(0.8364);right:auto;left:354.9000000000001px;width:75px;text-align:right;">440,00</div>
<div class="a" style="left:439.4000000000001px;top:63.25px;width:36.6px;height:12.6px;background:#fff;border:1px solid #c6c6c6;box-sizing:border-box;"></div>
<div class="t" style="right:670.5999999999999px;transform-origin:100% 50%;top:66.67px;font-size:7.26px;line-height:8.35px;color:#101010;transform:scaleX(0.8364);right:auto;left:399.4000000000001px;width:75px;text-align:right;">150,00</div>
<div class="a" style="left:2.3999999999999773px;top:79.55px;width:483px;height:2px;background:#dcdcdc;"></div>
<div class="a" style="left:2.3999999999999773px;top:83.60000000000002px;width:62.9px;height:12.6px;background:#fff;border:1px solid #c6c6c6;box-sizing:border-box;"></div>
<div class="a" style="left:72.70000000000005px;top:83.60000000000002px;width:47.4px;height:12.6px;background:#fff;border:1px solid #c6c6c6;box-sizing:border-box;"></div>
<div class="t" style="left:3.5px;transform-origin:0 50%;top:85.62px;font-size:7.26px;line-height:8.35px;color:#101010;transform:scaleX(0.8364);">01 JMP</div>
<div class="t" style="left:74.10000000000002px;transform-origin:0 50%;top:85.62px;font-size:7.26px;line-height:8.35px;color:#101010;transform:scaleX(0.8364);">Listnaté tvrdé</div>
<div class="a" style="left:127.89999999999998px;top:83.60000000000002px;width:36.6px;height:12.6px;background:#fff;border:1px solid #c6c6c6;box-sizing:border-box;"></div>
<div class="t" style="right:982.1px;transform-origin:100% 50%;top:87.02px;font-size:7.26px;line-height:8.35px;color:#101010;transform:scaleX(0.8364);right:auto;left:87.89999999999998px;width:75px;text-align:right;">560,00</div>
<div class="a" style="left:172.39999999999998px;top:83.60000000000002px;width:36.6px;height:12.6px;background:#fff;border:1px solid #c6c6c6;box-sizing:border-box;"></div>
<div class="t" style="right:937.6px;transform-origin:100% 50%;top:87.02px;font-size:7.26px;line-height:8.35px;color:#101010;transform:scaleX(0.8364);right:auto;left:132.39999999999998px;width:75px;text-align:right;">440,00</div>
<div class="a" style="left:216.89999999999998px;top:83.60000000000002px;width:36.6px;height:12.6px;background:#fff;border:1px solid #c6c6c6;box-sizing:border-box;"></div>
<div class="t" style="right:893.1px;transform-origin:100% 50%;top:87.02px;font-size:7.26px;line-height:8.35px;color:#101010;transform:scaleX(0.8364);right:auto;left:176.89999999999998px;width:75px;text-align:right;">440,00</div>
<div class="a" style="left:261.4px;top:83.60000000000002px;width:36.6px;height:12.6px;background:#fff;border:1px solid #c6c6c6;box-sizing:border-box;"></div>
<div class="t" style="right:848.6px;transform-origin:100% 50%;top:87.02px;font-size:7.26px;line-height:8.35px;color:#101010;transform:scaleX(0.8364);right:auto;left:221.39999999999998px;width:75px;text-align:right;">440,00</div>
<div class="a" style="left:305.9px;top:83.60000000000002px;width:36.6px;height:12.6px;background:#fff;border:1px solid #c6c6c6;box-sizing:border-box;"></div>
<div class="t" style="right:804.1px;transform-origin:100% 50%;top:87.02px;font-size:7.26px;line-height:8.35px;color:#101010;transform:scaleX(0.8364);right:auto;left:265.9px;width:75px;text-align:right;">440,00</div>
<div class="a" style="left:350.4px;top:83.60000000000002px;width:36.6px;height:12.6px;background:#fff;border:1px solid #c6c6c6;box-sizing:border-box;"></div>
<div class="t" style="right:759.6px;transform-origin:100% 50%;top:87.02px;font-size:7.26px;line-height:8.35px;color:#101010;transform:scaleX(0.8364);right:auto;left:310.4px;width:75px;text-align:right;">440,00</div>
<div class="a" style="left:394.9000000000001px;top:83.60000000000002px;width:36.6px;height:12.6px;background:#fff;border:1px solid #c6c6c6;box-sizing:border-box;"></div>
<div class="t" style="right:715.0999999999999px;transform-origin:100% 50%;top:87.02px;font-size:7.26px;line-height:8.35px;color:#101010;transform:scaleX(0.8364);right:auto;left:354.9000000000001px;width:75px;text-align:right;">440,00</div>
<div class="a" style="left:439.4000000000001px;top:83.60000000000002px;width:36.6px;height:12.6px;background:#fff;border:1px solid #c6c6c6;box-sizing:border-box;"></div>
<div class="t" style="right:670.5999999999999px;transform-origin:100% 50%;top:87.02px;font-size:7.26px;line-height:8.35px;color:#101010;transform:scaleX(0.8364);right:auto;left:399.4000000000001px;width:75px;text-align:right;">150,00</div>
<div class="a" style="left:2.3999999999999773px;top:99.90000000000002px;width:483px;height:2px;background:#dcdcdc;"></div>
<div class="a" style="left:2.3999999999999773px;top:103.94999999999999px;width:62.9px;height:12.6px;background:#fff;border:1px solid #c6c6c6;box-sizing:border-box;"></div>
<div class="a" style="left:72.70000000000005px;top:103.94999999999999px;width:47.4px;height:12.6px;background:#fff;border:1px solid #c6c6c6;box-sizing:border-box;"></div>
<div class="t" style="left:3.5px;transform-origin:0 50%;top:105.97px;font-size:7.26px;line-height:8.35px;color:#101010;transform:scaleX(0.8364);">01 JMP</div>
<div class="t" style="left:74.10000000000002px;transform-origin:0 50%;top:105.97px;font-size:7.26px;line-height:8.35px;color:#101010;transform:scaleX(0.8364);">Exotické</div>
<div class="a" style="left:127.89999999999998px;top:103.94999999999999px;width:36.6px;height:12.6px;background:#fff;border:1px solid #c6c6c6;box-sizing:border-box;"></div>
<div class="t" style="right:982.1px;transform-origin:100% 50%;top:107.37px;font-size:7.26px;line-height:8.35px;color:#101010;transform:scaleX(0.8364);right:auto;left:87.89999999999998px;width:75px;text-align:right;">560,00</div>
<div class="a" style="left:172.39999999999998px;top:103.94999999999999px;width:36.6px;height:12.6px;background:#fff;border:1px solid #c6c6c6;box-sizing:border-box;"></div>
<div class="t" style="right:937.6px;transform-origin:100% 50%;top:107.37px;font-size:7.26px;line-height:8.35px;color:#101010;transform:scaleX(0.8364);right:auto;left:132.39999999999998px;width:75px;text-align:right;">440,00</div>
<div class="a" style="left:216.89999999999998px;top:103.94999999999999px;width:36.6px;height:12.6px;background:#fff;border:1px solid #c6c6c6;box-sizing:border-box;"></div>
<div class="t" style="right:893.1px;transform-origin:100% 50%;top:107.37px;font-size:7.26px;line-height:8.35px;color:#101010;transform:scaleX(0.8364);right:auto;left:176.89999999999998px;width:75px;text-align:right;">440,00</div>
<div class="a" style="left:261.4px;top:103.94999999999999px;width:36.6px;height:12.6px;background:#fff;border:1px solid #c6c6c6;box-sizing:border-box;"></div>
<div class="t" style="right:848.6px;transform-origin:100% 50%;top:107.37px;font-size:7.26px;line-height:8.35px;color:#101010;transform:scaleX(0.8364);right:auto;left:221.39999999999998px;width:75px;text-align:right;">440,00</div>
<div class="a" style="left:305.9px;top:103.94999999999999px;width:36.6px;height:12.6px;background:#fff;border:1px solid #c6c6c6;box-sizing:border-box;"></div>
<div class="t" style="right:804.1px;transform-origin:100% 50%;top:107.37px;font-size:7.26px;line-height:8.35px;color:#101010;transform:scaleX(0.8364);right:auto;left:265.9px;width:75px;text-align:right;">440,00</div>
<div class="a" style="left:350.4px;top:103.94999999999999px;width:36.6px;height:12.6px;background:#fff;border:1px solid #c6c6c6;box-sizing:border-box;"></div>
<div class="t" style="right:759.6px;transform-origin:100% 50%;top:107.37px;font-size:7.26px;line-height:8.35px;color:#101010;transform:scaleX(0.8364);right:auto;left:310.4px;width:75px;text-align:right;">440,00</div>
<div class="a" style="left:394.9000000000001px;top:103.94999999999999px;width:36.6px;height:12.6px;background:#fff;border:1px solid #c6c6c6;box-sizing:border-box;"></div>
<div class="t" style="right:715.0999999999999px;transform-origin:100% 50%;top:107.37px;font-size:7.26px;line-height:8.35px;color:#101010;transform:scaleX(0.8364);right:auto;left:354.9000000000001px;width:75px;text-align:right;">440,00</div>
<div class="a" style="left:439.4000000000001px;top:103.94999999999999px;width:36.6px;height:12.6px;background:#fff;border:1px solid #c6c6c6;box-sizing:border-box;"></div>
<div class="t" style="right:670.5999999999999px;transform-origin:100% 50%;top:107.37px;font-size:7.26px;line-height:8.35px;color:#101010;transform:scaleX(0.8364);right:auto;left:399.4000000000001px;width:75px;text-align:right;">150,00</div>
<div class="a" style="left:2.3999999999999773px;top:120.24999999999999px;width:483px;height:2px;background:#dcdcdc;"></div>
<div class="a" style="left:2.3999999999999773px;top:124.30000000000001px;width:62.9px;height:12.6px;background:#fff;border:1px solid #c6c6c6;box-sizing:border-box;"></div>
<div class="a" style="left:72.70000000000005px;top:124.30000000000001px;width:47.4px;height:12.6px;background:#fff;border:1px solid #c6c6c6;box-sizing:border-box;"></div>
<div class="t" style="left:3.5px;transform-origin:0 50%;top:126.32px;font-size:7.26px;line-height:8.35px;color:#101010;transform:scaleX(0.8364);">02 Harvestor</div>
<div class="t" style="left:74.10000000000002px;transform-origin:0 50%;top:126.32px;font-size:7.26px;line-height:8.35px;color:#101010;transform:scaleX(0.8364);">Smrk, jedle</div>
<div class="a" style="left:127.89999999999998px;top:124.30000000000001px;width:36.6px;height:12.6px;background:#fff;border:1px solid #c6c6c6;box-sizing:border-box;"></div>
<div class="t" style="right:982.1px;transform-origin:100% 50%;top:127.72px;font-size:7.26px;line-height:8.35px;color:#101010;transform:scaleX(0.8364);right:auto;left:87.89999999999998px;width:75px;text-align:right;">440,00</div>
<div class="a" style="left:172.39999999999998px;top:124.30000000000001px;width:36.6px;height:12.6px;background:#fff;border:1px solid #c6c6c6;box-sizing:border-box;"></div>
<div class="t" style="right:937.6px;transform-origin:100% 50%;top:127.72px;font-size:7.26px;line-height:8.35px;color:#101010;transform:scaleX(0.8364);right:auto;left:132.39999999999998px;width:75px;text-align:right;">440,00</div>
<div class="a" style="left:216.89999999999998px;top:124.30000000000001px;width:36.6px;height:12.6px;background:#fff;border:1px solid #c6c6c6;box-sizing:border-box;"></div>
<div class="t" style="right:893.1px;transform-origin:100% 50%;top:127.72px;font-size:7.26px;line-height:8.35px;color:#101010;transform:scaleX(0.8364);right:auto;left:176.89999999999998px;width:75px;text-align:right;">440,00</div>
<div class="a" style="left:261.4px;top:124.30000000000001px;width:36.6px;height:12.6px;background:#fff;border:1px solid #c6c6c6;box-sizing:border-box;"></div>
<div class="t" style="right:848.6px;transform-origin:100% 50%;top:127.72px;font-size:7.26px;line-height:8.35px;color:#101010;transform:scaleX(0.8364);right:auto;left:221.39999999999998px;width:75px;text-align:right;">440,00</div>
<div class="a" style="left:305.9px;top:124.30000000000001px;width:36.6px;height:12.6px;background:#fff;border:1px solid #c6c6c6;box-sizing:border-box;"></div>
<div class="t" style="right:804.1px;transform-origin:100% 50%;top:127.72px;font-size:7.26px;line-height:8.35px;color:#101010;transform:scaleX(0.8364);right:auto;left:265.9px;width:75px;text-align:right;">440,00</div>
<div class="a" style="left:350.4px;top:124.30000000000001px;width:36.6px;height:12.6px;background:#fff;border:1px solid #c6c6c6;box-sizing:border-box;"></div>
<div class="t" style="right:759.6px;transform-origin:100% 50%;top:127.72px;font-size:7.26px;line-height:8.35px;color:#101010;transform:scaleX(0.8364);right:auto;left:310.4px;width:75px;text-align:right;">440,00</div>
<div class="a" style="left:394.9000000000001px;top:124.30000000000001px;width:36.6px;height:12.6px;background:#fff;border:1px solid #c6c6c6;box-sizing:border-box;"></div>
<div class="t" style="right:715.0999999999999px;transform-origin:100% 50%;top:127.72px;font-size:7.26px;line-height:8.35px;color:#101010;transform:scaleX(0.8364);right:auto;left:354.9000000000001px;width:75px;text-align:right;">440,00</div>
<div class="a" style="left:439.4000000000001px;top:124.30000000000001px;width:36.6px;height:12.6px;background:#fff;border:1px solid #c6c6c6;box-sizing:border-box;"></div>
<div class="t" style="right:670.5999999999999px;transform-origin:100% 50%;top:127.72px;font-size:7.26px;line-height:8.35px;color:#101010;transform:scaleX(0.8364);right:auto;left:399.4000000000001px;width:75px;text-align:right;">440,00</div>
<div class="a" style="left:2.3999999999999773px;top:140.60000000000002px;width:483px;height:2px;background:#dcdcdc;"></div>
<div class="a" style="left:2.3999999999999773px;top:144.64999999999998px;width:62.9px;height:12.6px;background:#fff;border:1px solid #c6c6c6;box-sizing:border-box;"></div>
<div class="a" style="left:72.70000000000005px;top:144.64999999999998px;width:47.4px;height:12.6px;background:#fff;border:1px solid #c6c6c6;box-sizing:border-box;"></div>
<div class="t" style="left:3.5px;transform-origin:0 50%;top:146.67px;font-size:7.26px;line-height:8.35px;color:#101010;transform:scaleX(0.8364);">02 Harvestor</div>
<div class="t" style="left:74.10000000000002px;transform-origin:0 50%;top:146.67px;font-size:7.26px;line-height:8.35px;color:#101010;transform:scaleX(0.8364);">Borovice</div>
<div class="a" style="left:127.89999999999998px;top:144.64999999999998px;width:36.6px;height:12.6px;background:#fff;border:1px solid #c6c6c6;box-sizing:border-box;"></div>
<div class="t" style="right:982.1px;transform-origin:100% 50%;top:148.07px;font-size:7.26px;line-height:8.35px;color:#101010;transform:scaleX(0.8364);right:auto;left:87.89999999999998px;width:75px;text-align:right;">440,00</div>
<div class="a" style="left:172.39999999999998px;top:144.64999999999998px;width:36.6px;height:12.6px;background:#fff;border:1px solid #c6c6c6;box-sizing:border-box;"></div>
<div class="t" style="right:937.6px;transform-origin:100% 50%;top:148.07px;font-size:7.26px;line-height:8.35px;color:#101010;transform:scaleX(0.8364);right:auto;left:132.39999999999998px;width:75px;text-align:right;">440,00</div>
<div class="a" style="left:216.89999999999998px;top:144.64999999999998px;width:36.6px;height:12.6px;background:#fff;border:1px solid #c6c6c6;box-sizing:border-box;"></div>
<div class="t" style="right:893.1px;transform-origin:100% 50%;top:148.07px;font-size:7.26px;line-height:8.35px;color:#101010;transform:scaleX(0.8364);right:auto;left:176.89999999999998px;width:75px;text-align:right;">440,00</div>
<div class="a" style="left:261.4px;top:144.64999999999998px;width:36.6px;height:12.6px;background:#fff;border:1px solid #c6c6c6;box-sizing:border-box;"></div>
<div class="t" style="right:848.6px;transform-origin:100% 50%;top:148.07px;font-size:7.26px;line-height:8.35px;color:#101010;transform:scaleX(0.8364);right:auto;left:221.39999999999998px;width:75px;text-align:right;">440,00</div>
<div class="a" style="left:305.9px;top:144.64999999999998px;width:36.6px;height:12.6px;background:#fff;border:1px solid #c6c6c6;box-sizing:border-box;"></div>
<div class="t" style="right:804.1px;transform-origin:100% 50%;top:148.07px;font-size:7.26px;line-height:8.35px;color:#101010;transform:scaleX(0.8364);right:auto;left:265.9px;width:75px;text-align:right;">440,00</div>
<div class="a" style="left:350.4px;top:144.64999999999998px;width:36.6px;height:12.6px;background:#fff;border:1px solid #c6c6c6;box-sizing:border-box;"></div>
<div class="t" style="right:759.6px;transform-origin:100% 50%;top:148.07px;font-size:7.26px;line-height:8.35px;color:#101010;transform:scaleX(0.8364);right:auto;left:310.4px;width:75px;text-align:right;">440,00</div>
<div class="a" style="left:394.9000000000001px;top:144.64999999999998px;width:36.6px;height:12.6px;background:#fff;border:1px solid #c6c6c6;box-sizing:border-box;"></div>
<div class="t" style="right:715.0999999999999px;transform-origin:100% 50%;top:148.07px;font-size:7.26px;line-height:8.35px;color:#101010;transform:scaleX(0.8364);right:auto;left:354.9000000000001px;width:75px;text-align:right;">440,00</div>
<div class="a" style="left:439.4000000000001px;top:144.64999999999998px;width:36.6px;height:12.6px;background:#fff;border:1px solid #c6c6c6;box-sizing:border-box;"></div>
<div class="t" style="right:670.5999999999999px;transform-origin:100% 50%;top:148.07px;font-size:7.26px;line-height:8.35px;color:#101010;transform:scaleX(0.8364);right:auto;left:399.4000000000001px;width:75px;text-align:right;">440,00</div>
<div class="a" style="left:2.3999999999999773px;top:160.95px;width:483px;height:2px;background:#dcdcdc;"></div>
<div class="a" style="left:2.3999999999999773px;top:165.0px;width:62.9px;height:12.6px;background:#fff;border:1px solid #c6c6c6;box-sizing:border-box;"></div>
<div class="a" style="left:72.70000000000005px;top:165.0px;width:47.4px;height:12.6px;background:#fff;border:1px solid #c6c6c6;box-sizing:border-box;"></div>
<div class="t" style="left:3.5px;transform-origin:0 50%;top:167.02px;font-size:7.26px;line-height:8.35px;color:#101010;transform:scaleX(0.8364);">02 Harvestor</div>
<div class="t" style="left:74.10000000000002px;transform-origin:0 50%;top:167.02px;font-size:7.26px;line-height:8.35px;color:#101010;transform:scaleX(0.8364);">Modřín</div>
<div class="a" style="left:127.89999999999998px;top:165.0px;width:36.6px;height:12.6px;background:#fff;border:1px solid #c6c6c6;box-sizing:border-box;"></div>
<div class="t" style="right:982.1px;transform-origin:100% 50%;top:168.42px;font-size:7.26px;line-height:8.35px;color:#101010;transform:scaleX(0.8364);right:auto;left:87.89999999999998px;width:75px;text-align:right;">440,00</div>
<div class="a" style="left:172.39999999999998px;top:165.0px;width:36.6px;height:12.6px;background:#fff;border:1px solid #c6c6c6;box-sizing:border-box;"></div>
<div class="t" style="right:937.6px;transform-origin:100% 50%;top:168.42px;font-size:7.26px;line-height:8.35px;color:#101010;transform:scaleX(0.8364);right:auto;left:132.39999999999998px;width:75px;text-align:right;">440,00</div>
<div class="a" style="left:216.89999999999998px;top:165.0px;width:36.6px;height:12.6px;background:#fff;border:1px solid #c6c6c6;box-sizing:border-box;"></div>
<div class="t" style="right:893.1px;transform-origin:100% 50%;top:168.42px;font-size:7.26px;line-height:8.35px;color:#101010;transform:scaleX(0.8364);right:auto;left:176.89999999999998px;width:75px;text-align:right;">440,00</div>
<div class="a" style="left:261.4px;top:165.0px;width:36.6px;height:12.6px;background:#fff;border:1px solid #c6c6c6;box-sizing:border-box;"></div>
<div class="t" style="right:848.6px;transform-origin:100% 50%;top:168.42px;font-size:7.26px;line-height:8.35px;color:#101010;transform:scaleX(0.8364);right:auto;left:221.39999999999998px;width:75px;text-align:right;">440,00</div>
<div class="a" style="left:305.9px;top:165.0px;width:36.6px;height:12.6px;background:#fff;border:1px solid #c6c6c6;box-sizing:border-box;"></div>
<div class="t" style="right:804.1px;transform-origin:100% 50%;top:168.42px;font-size:7.26px;line-height:8.35px;color:#101010;transform:scaleX(0.8364);right:auto;left:265.9px;width:75px;text-align:right;">440,00</div>
<div class="a" style="left:350.4px;top:165.0px;width:36.6px;height:12.6px;background:#fff;border:1px solid #c6c6c6;box-sizing:border-box;"></div>
<div class="t" style="right:759.6px;transform-origin:100% 50%;top:168.42px;font-size:7.26px;line-height:8.35px;color:#101010;transform:scaleX(0.8364);right:auto;left:310.4px;width:75px;text-align:right;">440,00</div>
<div class="a" style="left:394.9000000000001px;top:165.0px;width:36.6px;height:12.6px;background:#fff;border:1px solid #c6c6c6;box-sizing:border-box;"></div>
<div class="t" style="right:715.0999999999999px;transform-origin:100% 50%;top:168.42px;font-size:7.26px;line-height:8.35px;color:#101010;transform:scaleX(0.8364);right:auto;left:354.9000000000001px;width:75px;text-align:right;">440,00</div>
<div class="a" style="left:439.4000000000001px;top:165.0px;width:36.6px;height:12.6px;background:#fff;border:1px solid #c6c6c6;box-sizing:border-box;"></div>
<div class="t" style="right:670.5999999999999px;transform-origin:100% 50%;top:168.42px;font-size:7.26px;line-height:8.35px;color:#101010;transform:scaleX(0.8364);right:auto;left:399.4000000000001px;width:75px;text-align:right;">440,00</div>
<div class="a" style="left:2.3999999999999773px;top:181.3px;width:483px;height:2px;background:#dcdcdc;"></div>
<div class="a" style="left:2.3999999999999773px;top:185.35000000000002px;width:62.9px;height:12.6px;background:#fff;border:1px solid #c6c6c6;box-sizing:border-box;"></div>
<div class="a" style="left:72.70000000000005px;top:185.35000000000002px;width:47.4px;height:12.6px;background:#fff;border:1px solid #c6c6c6;box-sizing:border-box;"></div>
<div class="t" style="left:3.5px;transform-origin:0 50%;top:187.37px;font-size:7.26px;line-height:8.35px;color:#101010;transform:scaleX(0.8364);">02 Harvestor</div>
<div class="t" style="left:74.10000000000002px;transform-origin:0 50%;top:187.37px;font-size:7.26px;line-height:8.35px;color:#101010;transform:scaleX(0.8364);">Listnaté měkké</div>
<div class="a" style="left:127.89999999999998px;top:185.35000000000002px;width:36.6px;height:12.6px;background:#fff;border:1px solid #c6c6c6;box-sizing:border-box;"></div>
<div class="t" style="right:982.1px;transform-origin:100% 50%;top:188.77px;font-size:7.26px;line-height:8.35px;color:#101010;transform:scaleX(0.8364);right:auto;left:87.89999999999998px;width:75px;text-align:right;">440,00</div>
<div class="a" style="left:172.39999999999998px;top:185.35000000000002px;width:36.6px;height:12.6px;background:#fff;border:1px solid #c6c6c6;box-sizing:border-box;"></div>
<div class="t" style="right:937.6px;transform-origin:100% 50%;top:188.77px;font-size:7.26px;line-height:8.35px;color:#101010;transform:scaleX(0.8364);right:auto;left:132.39999999999998px;width:75px;text-align:right;">440,00</div>
<div class="a" style="left:216.89999999999998px;top:185.35000000000002px;width:36.6px;height:12.6px;background:#fff;border:1px solid #c6c6c6;box-sizing:border-box;"></div>
<div class="t" style="right:893.1px;transform-origin:100% 50%;top:188.77px;font-size:7.26px;line-height:8.35px;color:#101010;transform:scaleX(0.8364);right:auto;left:176.89999999999998px;width:75px;text-align:right;">440,00</div>
<div class="a" style="left:261.4px;top:185.35000000000002px;width:36.6px;height:12.6px;background:#fff;border:1px solid #c6c6c6;box-sizing:border-box;"></div>
<div class="t" style="right:848.6px;transform-origin:100% 50%;top:188.77px;font-size:7.26px;line-height:8.35px;color:#101010;transform:scaleX(0.8364);right:auto;left:221.39999999999998px;width:75px;text-align:right;">440,00</div>
<div class="a" style="left:305.9px;top:185.35000000000002px;width:36.6px;height:12.6px;background:#fff;border:1px solid #c6c6c6;box-sizing:border-box;"></div>
<div class="t" style="right:804.1px;transform-origin:100% 50%;top:188.77px;font-size:7.26px;line-height:8.35px;color:#101010;transform:scaleX(0.8364);right:auto;left:265.9px;width:75px;text-align:right;">440,00</div>
<div class="a" style="left:350.4px;top:185.35000000000002px;width:36.6px;height:12.6px;background:#fff;border:1px solid #c6c6c6;box-sizing:border-box;"></div>
<div class="t" style="right:759.6px;transform-origin:100% 50%;top:188.77px;font-size:7.26px;line-height:8.35px;color:#101010;transform:scaleX(0.8364);right:auto;left:310.4px;width:75px;text-align:right;">440,00</div>
<div class="a" style="left:394.9000000000001px;top:185.35000000000002px;width:36.6px;height:12.6px;background:#fff;border:1px solid #c6c6c6;box-sizing:border-box;"></div>
<div class="t" style="right:715.0999999999999px;transform-origin:100% 50%;top:188.77px;font-size:7.26px;line-height:8.35px;color:#101010;transform:scaleX(0.8364);right:auto;left:354.9000000000001px;width:75px;text-align:right;">440,00</div>
<div class="a" style="left:439.4000000000001px;top:185.35000000000002px;width:36.6px;height:12.6px;background:#fff;border:1px solid #c6c6c6;box-sizing:border-box;"></div>
<div class="t" style="right:670.5999999999999px;transform-origin:100% 50%;top:188.77px;font-size:7.26px;line-height:8.35px;color:#101010;transform:scaleX(0.8364);right:auto;left:399.4000000000001px;width:75px;text-align:right;">440,00</div>
<div class="a" style="left:2.3999999999999773px;top:201.65000000000003px;width:483px;height:2px;background:#dcdcdc;"></div>
<div class="a" style="left:2.3999999999999773px;top:205.70000000000005px;width:62.9px;height:12.6px;background:#fff;border:1px solid #c6c6c6;box-sizing:border-box;"></div>
<div class="a" style="left:72.70000000000005px;top:205.70000000000005px;width:47.4px;height:12.6px;background:#fff;border:1px solid #c6c6c6;box-sizing:border-box;"></div>
<div class="t" style="left:3.5px;transform-origin:0 50%;top:207.72px;font-size:7.26px;line-height:8.35px;color:#101010;transform:scaleX(0.8364);">02 Harvestor</div>
<div class="t" style="left:74.10000000000002px;transform-origin:0 50%;top:207.72px;font-size:7.26px;line-height:8.35px;color:#101010;transform:scaleX(0.8364);">Listnaté tvrdé</div>
<div class="a" style="left:127.89999999999998px;top:205.70000000000005px;width:36.6px;height:12.6px;background:#fff;border:1px solid #c6c6c6;box-sizing:border-box;"></div>
<div class="t" style="right:982.1px;transform-origin:100% 50%;top:209.12px;font-size:7.26px;line-height:8.35px;color:#101010;transform:scaleX(0.8364);right:auto;left:87.89999999999998px;width:75px;text-align:right;">440,00</div>
<div class="a" style="left:172.39999999999998px;top:205.70000000000005px;width:36.6px;height:12.6px;background:#fff;border:1px solid #c6c6c6;box-sizing:border-box;"></div>
<div class="t" style="right:937.6px;transform-origin:100% 50%;top:209.12px;font-size:7.26px;line-height:8.35px;color:#101010;transform:scaleX(0.8364);right:auto;left:132.39999999999998px;width:75px;text-align:right;">440,00</div>
<div class="a" style="left:216.89999999999998px;top:205.70000000000005px;width:36.6px;height:12.6px;background:#fff;border:1px solid #c6c6c6;box-sizing:border-box;"></div>
<div class="t" style="right:893.1px;transform-origin:100% 50%;top:209.12px;font-size:7.26px;line-height:8.35px;color:#101010;transform:scaleX(0.8364);right:auto;left:176.89999999999998px;width:75px;text-align:right;">440,00</div>
<div class="a" style="left:261.4px;top:205.70000000000005px;width:36.6px;height:12.6px;background:#fff;border:1px solid #c6c6c6;box-sizing:border-box;"></div>
<div class="t" style="right:848.6px;transform-origin:100% 50%;top:209.12px;font-size:7.26px;line-height:8.35px;color:#101010;transform:scaleX(0.8364);right:auto;left:221.39999999999998px;width:75px;text-align:right;">440,00</div>
<div class="a" style="left:305.9px;top:205.70000000000005px;width:36.6px;height:12.6px;background:#fff;border:1px solid #c6c6c6;box-sizing:border-box;"></div>
<div class="t" style="right:804.1px;transform-origin:100% 50%;top:209.12px;font-size:7.26px;line-height:8.35px;color:#101010;transform:scaleX(0.8364);right:auto;left:265.9px;width:75px;text-align:right;">440,00</div>
<div class="a" style="left:350.4px;top:205.70000000000005px;width:36.6px;height:12.6px;background:#fff;border:1px solid #c6c6c6;box-sizing:border-box;"></div>
<div class="t" style="right:759.6px;transform-origin:100% 50%;top:209.12px;font-size:7.26px;line-height:8.35px;color:#101010;transform:scaleX(0.8364);right:auto;left:310.4px;width:75px;text-align:right;">440,00</div>
<div class="a" style="left:394.9000000000001px;top:205.70000000000005px;width:36.6px;height:12.6px;background:#fff;border:1px solid #c6c6c6;box-sizing:border-box;"></div>
<div class="t" style="right:715.0999999999999px;transform-origin:100% 50%;top:209.12px;font-size:7.26px;line-height:8.35px;color:#101010;transform:scaleX(0.8364);right:auto;left:354.9000000000001px;width:75px;text-align:right;">440,00</div>
<div class="a" style="left:439.4000000000001px;top:205.70000000000005px;width:36.6px;height:12.6px;background:#fff;border:1px solid #c6c6c6;box-sizing:border-box;"></div>
<div class="t" style="right:670.5999999999999px;transform-origin:100% 50%;top:209.12px;font-size:7.26px;line-height:8.35px;color:#101010;transform:scaleX(0.8364);right:auto;left:399.4000000000001px;width:75px;text-align:right;">440,00</div>
<div class="a" style="left:2.3999999999999773px;top:222.00000000000006px;width:483px;height:2px;background:#dcdcdc;"></div>
<div class="a" style="left:2.3999999999999773px;top:226.04999999999995px;width:62.9px;height:12.6px;background:#fff;border:1px solid #c6c6c6;box-sizing:border-box;"></div>
<div class="a" style="left:72.70000000000005px;top:226.04999999999995px;width:47.4px;height:12.6px;background:#fff;border:1px solid #c6c6c6;box-sizing:border-box;"></div>
<div class="t" style="left:3.5px;transform-origin:0 50%;top:228.07px;font-size:7.26px;line-height:8.35px;color:#101010;transform:scaleX(0.8364);">02 Harvestor</div>
<div class="t" style="left:74.10000000000002px;transform-origin:0 50%;top:228.07px;font-size:7.26px;line-height:8.35px;color:#101010;transform:scaleX(0.8364);">Exotické</div>
<div class="a" style="left:127.89999999999998px;top:226.04999999999995px;width:36.6px;height:12.6px;background:#fff;border:1px solid #c6c6c6;box-sizing:border-box;"></div>
<div class="t" style="right:982.1px;transform-origin:100% 50%;top:229.47px;font-size:7.26px;line-height:8.35px;color:#101010;transform:scaleX(0.8364);right:auto;left:87.89999999999998px;width:75px;text-align:right;">440,00</div>
<div class="a" style="left:172.39999999999998px;top:226.04999999999995px;width:36.6px;height:12.6px;background:#fff;border:1px solid #c6c6c6;box-sizing:border-box;"></div>
<div class="t" style="right:937.6px;transform-origin:100% 50%;top:229.47px;font-size:7.26px;line-height:8.35px;color:#101010;transform:scaleX(0.8364);right:auto;left:132.39999999999998px;width:75px;text-align:right;">440,00</div>
<div class="a" style="left:216.89999999999998px;top:226.04999999999995px;width:36.6px;height:12.6px;background:#fff;border:1px solid #c6c6c6;box-sizing:border-box;"></div>
<div class="t" style="right:893.1px;transform-origin:100% 50%;top:229.47px;font-size:7.26px;line-height:8.35px;color:#101010;transform:scaleX(0.8364);right:auto;left:176.89999999999998px;width:75px;text-align:right;">440,00</div>
<div class="a" style="left:261.4px;top:226.04999999999995px;width:36.6px;height:12.6px;background:#fff;border:1px solid #c6c6c6;box-sizing:border-box;"></div>
<div class="t" style="right:848.6px;transform-origin:100% 50%;top:229.47px;font-size:7.26px;line-height:8.35px;color:#101010;transform:scaleX(0.8364);right:auto;left:221.39999999999998px;width:75px;text-align:right;">440,00</div>
<div class="a" style="left:305.9px;top:226.04999999999995px;width:36.6px;height:12.6px;background:#fff;border:1px solid #c6c6c6;box-sizing:border-box;"></div>
<div class="t" style="right:804.1px;transform-origin:100% 50%;top:229.47px;font-size:7.26px;line-height:8.35px;color:#101010;transform:scaleX(0.8364);right:auto;left:265.9px;width:75px;text-align:right;">440,00</div>
<div class="a" style="left:350.4px;top:226.04999999999995px;width:36.6px;height:12.6px;background:#fff;border:1px solid #c6c6c6;box-sizing:border-box;"></div>
<div class="t" style="right:759.6px;transform-origin:100% 50%;top:229.47px;font-size:7.26px;line-height:8.35px;color:#101010;transform:scaleX(0.8364);right:auto;left:310.4px;width:75px;text-align:right;">440,00</div>
<div class="a" style="left:394.9000000000001px;top:226.04999999999995px;width:36.6px;height:12.6px;background:#fff;border:1px solid #c6c6c6;box-sizing:border-box;"></div>
<div class="t" style="right:715.0999999999999px;transform-origin:100% 50%;top:229.47px;font-size:7.26px;line-height:8.35px;color:#101010;transform:scaleX(0.8364);right:auto;left:354.9000000000001px;width:75px;text-align:right;">440,00</div>
<div class="a" style="left:439.4000000000001px;top:226.04999999999995px;width:36.6px;height:12.6px;background:#fff;border:1px solid #c6c6c6;box-sizing:border-box;"></div>
<div class="t" style="right:670.5999999999999px;transform-origin:100% 50%;top:229.47px;font-size:7.26px;line-height:8.35px;color:#101010;transform:scaleX(0.8364);right:auto;left:399.4000000000001px;width:75px;text-align:right;">440,00</div>
<div class="a" style="left:2.3999999999999773px;top:242.34999999999997px;width:483px;height:2px;background:#dcdcdc;"></div>
<div class="a" style="left:2.3999999999999773px;top:246.39999999999998px;width:62.9px;height:12.6px;background:#fff;border:1px solid #c6c6c6;box-sizing:border-box;"></div>
<div class="a" style="left:72.70000000000005px;top:246.39999999999998px;width:47.4px;height:12.6px;background:#fff;border:1px solid #c6c6c6;box-sizing:border-box;"></div>
<div class="t" style="left:3.5px;transform-origin:0 50%;top:248.42px;font-size:7.26px;line-height:8.35px;color:#101010;transform:scaleX(0.8364);">03 Vyvážečka P-OM</div>
<div class="t" style="left:74.10000000000002px;transform-origin:0 50%;top:248.42px;font-size:7.26px;line-height:8.35px;color:#101010;transform:scaleX(0.8364);">Smrk, jedle</div>
<div class="a" style="left:127.89999999999998px;top:246.39999999999998px;width:36.6px;height:12.6px;background:#fff;border:1px solid #c6c6c6;box-sizing:border-box;"></div>
<div class="t" style="right:982.1px;transform-origin:100% 50%;top:249.82px;font-size:7.26px;line-height:8.35px;color:#101010;transform:scaleX(0.8364);right:auto;left:87.89999999999998px;width:75px;text-align:right;">440,00</div>
<div class="a" style="left:172.39999999999998px;top:246.39999999999998px;width:36.6px;height:12.6px;background:#fff;border:1px solid #c6c6c6;box-sizing:border-box;"></div>
<div class="t" style="right:937.6px;transform-origin:100% 50%;top:249.82px;font-size:7.26px;line-height:8.35px;color:#101010;transform:scaleX(0.8364);right:auto;left:132.39999999999998px;width:75px;text-align:right;">440,00</div>
<div class="a" style="left:216.89999999999998px;top:246.39999999999998px;width:36.6px;height:12.6px;background:#fff;border:1px solid #c6c6c6;box-sizing:border-box;"></div>
<div class="t" style="right:893.1px;transform-origin:100% 50%;top:249.82px;font-size:7.26px;line-height:8.35px;color:#101010;transform:scaleX(0.8364);right:auto;left:176.89999999999998px;width:75px;text-align:right;">440,00</div>
<div class="a" style="left:261.4px;top:246.39999999999998px;width:36.6px;height:12.6px;background:#fff;border:1px solid #c6c6c6;box-sizing:border-box;"></div>
<div class="t" style="right:848.6px;transform-origin:100% 50%;top:249.82px;font-size:7.26px;line-height:8.35px;color:#101010;transform:scaleX(0.8364);right:auto;left:221.39999999999998px;width:75px;text-align:right;">440,00</div>
<div class="a" style="left:305.9px;top:246.39999999999998px;width:36.6px;height:12.6px;background:#fff;border:1px solid #c6c6c6;box-sizing:border-box;"></div>
<div class="t" style="right:804.1px;transform-origin:100% 50%;top:249.82px;font-size:7.26px;line-height:8.35px;color:#101010;transform:scaleX(0.8364);right:auto;left:265.9px;width:75px;text-align:right;">440,00</div>
<div class="a" style="left:350.4px;top:246.39999999999998px;width:36.6px;height:12.6px;background:#fff;border:1px solid #c6c6c6;box-sizing:border-box;"></div>
<div class="t" style="right:759.6px;transform-origin:100% 50%;top:249.82px;font-size:7.26px;line-height:8.35px;color:#101010;transform:scaleX(0.8364);right:auto;left:310.4px;width:75px;text-align:right;">440,00</div>
<div class="a" style="left:394.9000000000001px;top:246.39999999999998px;width:36.6px;height:12.6px;background:#fff;border:1px solid #c6c6c6;box-sizing:border-box;"></div>
<div class="t" style="right:715.0999999999999px;transform-origin:100% 50%;top:249.82px;font-size:7.26px;line-height:8.35px;color:#101010;transform:scaleX(0.8364);right:auto;left:354.9000000000001px;width:75px;text-align:right;">440,00</div>
<div class="a" style="left:439.4000000000001px;top:246.39999999999998px;width:36.6px;height:12.6px;background:#fff;border:1px solid #c6c6c6;box-sizing:border-box;"></div>
<div class="t" style="right:670.5999999999999px;transform-origin:100% 50%;top:249.82px;font-size:7.26px;line-height:8.35px;color:#101010;transform:scaleX(0.8364);right:auto;left:399.4000000000001px;width:75px;text-align:right;">440,00</div>
<div class="a" style="left:2.3999999999999773px;top:262.7px;width:483px;height:2px;background:#dcdcdc;"></div>
</div>
<div class="a" style="left:1133px;top:340px;width:10px;height:261px;background:#f0f0f0;"></div>
<div class="a" style="left:1134px;top:349px;width:8px;height:41px;background:#c2c2c2;"></div>
<svg class="a" style="left:1135px;top:342px;" width="6" height="4" viewBox="0 0 6 4"><path d="M0.5 3.5L3 1L5.5 3.5" fill="none" stroke="#999" stroke-width="0.8"/></svg>
<svg class="a" style="left:1134.5px;top:594.5px;" width="6" height="4" viewBox="0 0 6 4"><path d="M0.5 0.5L3 3L5.5 0.5" fill="none" stroke="#999" stroke-width="0.8"/></svg>
<div class="a" style="left:647.5px;top:604px;width:497px;height:13px;background:#f1efee;"></div>
<div class="t" style="left:1054px;transform-origin:0 50%;top:607.62px;font-size:7.26px;line-height:8.35px;color:#101010;transform:scaleX(0.8052);">Lupa: 100%</div>
<div class="a" style="left:1090.7px;top:610.5px;width:47.3px;height:1.5px;background:#dcdcdc;"></div>
<div class="a" style="left:1111px;top:606.7px;width:5.6px;height:8.7px;background:#f4f4f4;border:1px solid #a8a8a8;box-sizing:border-box;"></div>
<div class="a" style="left:162px;top:483px;width:462px;height:208px;background:#fff;border:1px solid #7c7c7c;box-sizing:border-box;"></div>
<svg class="a" style="left:167.5px;top:487.4px;" width="9.3" height="9.3" viewBox="0 0 9.3 9.3"><rect x="0" y="0" width="9.3" height="9.3" fill="#0b7a2c"/><circle cx="7.440000000000001" cy="1.8600000000000003" r="1.116" fill="#f07020"/><path d="M1.86 5.86 L3.25 8.65 L0.47 8.65Z" fill="#f4fbf4"/><path d="M4.65 2.79 L6.05 5.58 L3.25 5.58Z" fill="#f4fbf4"/><path d="M4.65 5.86 L6.05 8.65 L3.25 8.65Z" fill="#f4fbf4"/><path d="M7.44 2.79 L8.84 5.58 L6.05 5.58Z" fill="#f4fbf4"/><path d="M7.44 5.86 L8.84 8.65 L6.05 8.65Z" fill="#f4fbf4"/></svg>
<svg class="a" style="left:606.0px;top:488.5px;" width="7" height="7" viewBox="0 0 7 7"><path d="M0.5 0.5L6.5 6.5M6.5 0.5L0.5 6.5" stroke="#2b2b2b" stroke-width="0.9"/></svg>
<svg class="a" style="left:578.1px;top:488.5px;" width="7" height="7" viewBox="0 0 7 7"><rect x="0.5" y="0.5" width="6" height="6" fill="none" stroke="#2b2b2b" stroke-width="1"/></svg>
<svg class="a" style="left:550.7px;top:491.5px;" width="7" height="2" viewBox="0 0 7 2"><rect x="0" y="0" width="6" height="1" fill="#cfcfcf"/></svg>
<div class="a" style="left:163.5px;top:502px;width:460px;height:15.7px;background:#dfe7f2;"></div>
<div class="a" style="left:163.5px;top:502.4px;width:33px;height:13.6px;background:linear-gradient(#7098dc,#3564bd 45%,#2352aa 60%,#3a6ac4);border-radius:2px 2px 0 0;"></div>
<svg class="a" style="left:172.0px;top:504.2px;" width="10" height="10" viewBox="0 0 10 10"><rect x="0" y="0" width="10" height="10" fill="#0b7a2c"/><circle cx="8.0" cy="2.0" r="1.2" fill="#f07020"/><path d="M2.00 6.30 L3.50 9.30 L0.50 9.30Z" fill="#f4fbf4"/><path d="M5.00 3.00 L6.50 6.00 L3.50 6.00Z" fill="#f4fbf4"/><path d="M5.00 6.30 L6.50 9.30 L3.50 9.30Z" fill="#f4fbf4"/><path d="M8.00 3.00 L9.50 6.00 L6.50 6.00Z" fill="#f4fbf4"/><path d="M8.00 6.30 L9.50 9.30 L6.50 9.30Z" fill="#f4fbf4"/></svg>
<svg class="a" style="left:183.5px;top:507.7px;" width="6" height="4" viewBox="0 0 6 4"><path d="M0 0H6L3 3.5Z" fill="#fff"/></svg>
<div class="a" style="left:198.6px;top:503.7px;width:27.4px;height:14px;background:linear-gradient(#fff,#f8fafd);border:1px solid #d5deea;border-bottom:none;box-sizing:border-box;"></div>
<div class="t" style="left:192.3px;width:40px;text-align:center;transform-origin:50% 50%;top:507.64px;font-size:8.47px;line-height:9.74px;color:#262626;transform:scaleX(0.8273);">Data</div>
<div class="t" style="left:236px;transform-origin:0 50%;top:507.74px;font-size:8.47px;line-height:9.74px;color:#262626;transform:scaleX(0.8443);">Nápověda</div>
<svg class="a" style="left:611.6px;top:504.2px;" width="9.6" height="9.6" viewBox="0 0 9.6 9.6"><circle cx="4.8" cy="4.8" r="4.8" fill="#7fadf0"/><text x="4.8" y="7.4" font-size="6.72" text-anchor="middle" fill="#e8f0ff" font-family="Liberation Sans">?</text></svg>
<div class="a" style="left:163.5px;top:517.7px;width:459.5px;height:54.299999999999955px;background:linear-gradient(#fdfdfe,#f1f4fa 35%,#ecf0f8 60%,#ebeff7);"></div>
<div class="a" style="left:163.5px;top:571px;width:459.5px;height:1px;background:#c4d1e3;"></div>
<svg class="a" style="left:171.2px;top:521.3000000000001px;" width="18.8" height="18.8" viewBox="0 0 18.8 18.8"><circle cx="9.4" cy="9.4" r="9.4" fill="#a6d9a6"/><path d="M4.70 9.40L8.27 12.97L14.57 5.83" fill="none" stroke="#fff" stroke-width="2.07"/></svg>
<div class="a" style="left:198px;top:522px;width:18.599999999999994px;height:17.5px;box-sizing:border-box;border:1px solid #97a6ba;border-bottom:2px solid #8796aa;border-radius:2px;background:linear-gradient(#e6ebf2,#cfd7e2);"></div>
<div class="t" style="left:192.3px;width:30px;text-align:center;transform-origin:50% 50%;top:526.91px;font-size:8.09px;line-height:9.3px;color:#4a4a4a;transform:scaleX(1.0206);">Esc</div>
<div class="t" style="left:165.65px;width:30px;text-align:center;transform-origin:50% 50%;top:542.74px;font-size:8.47px;line-height:9.74px;color:#101010;transform:scaleX(0.8038);">Ok</div>
<div class="t" style="left:198px;transform-origin:0 50%;top:542.74px;font-size:8.47px;line-height:9.74px;color:#101010;transform:scaleX(0.8547);">Zavřít</div>
<svg class="a" style="left:227px;top:522px;" width="16" height="16" viewBox="0 0 16 16"><g opacity="0.45"><rect x="3.52" y="0.5" width="8.96" height="5.6" fill="#fff" stroke="#6fa0e0" stroke-width="1"/><rect x="0.5" y="4.8" width="15" height="6.72" rx="2" fill="#a9c8f0" stroke="#6fa0e0" stroke-width="1"/><rect x="3.52" y="8.8" width="8.96" height="6.88" fill="#fff" stroke="#6fa0e0" stroke-width="1"/><path d="M5.12 11.52H10.88M5.12 13.6H10.88" stroke="#6fa0e0" stroke-width="0.8"/></g></svg>
<div class="t" style="left:220.2px;width:30px;text-align:center;transform-origin:50% 50%;top:542.74px;font-size:8.47px;line-height:9.74px;color:#a9b0ba;transform:scaleX(0.7757);">Tisk</div>
<div class="a" style="left:221px;top:521px;width:1px;height:47px;background:#d5dde9;"></div>
<div class="a" style="left:251px;top:521px;width:1px;height:47px;background:#d5dde9;"></div>
<div class="t" style="left:188.15px;width:40px;text-align:center;transform-origin:50% 50%;top:561.54px;font-size:8.47px;line-height:9.74px;color:#a9b0ba;transform:scaleX(0.8323);">Uložení</div>
<div class="t" style="left:168.3px;transform-origin:0 50%;top:574.44px;font-size:8.47px;line-height:9.74px;color:#101010;transform:scaleX(0.8451);">Detail</div>
<div class="a" style="left:189px;top:578.3px;width:430px;height:1px;background:#e2e7ee;"></div>
<div class="t" style="left:169.4px;transform-origin:0 50%;top:593.14px;font-size:8.47px;line-height:9.74px;color:#101010;transform:scaleX(0.8599);">Obchodní partner:</div>
<div class="a" style="left:166.3px;top:603.5px;width:172.3px;height:14.2px;background:#ebebeb;border:1px solid #d6d6d6;box-sizing:border-box;"></div>
<div class="t" style="left:169.8px;transform-origin:0 50%;top:606.14px;font-size:8.47px;line-height:9.74px;color:#101010;transform:scaleX(0.8195);">00000</div>
<div class="t" style="left:226px;transform-origin:0 50%;top:606.14px;font-size:8.47px;line-height:9.74px;color:#101010;transform:scaleX(0.8651);">Moje firma</div>
<svg class="a" style="left:329.5px;top:609.5px;" width="5" height="3" viewBox="0 0 5 3"><path d="M0.3 0.3L2.5 2.5L4.7 0.3" fill="none" stroke="#aaa" stroke-width="0.9"/></svg>
<div class="t" style="left:350.8px;transform-origin:0 50%;top:593.14px;font-size:8.47px;line-height:9.74px;color:#101010;transform:scaleX(0.8395);">Měs. pro mzdy:</div>
<div class="a" style="left:347.6px;top:603.5px;width:81.5px;height:14.3px;background:#fff;border:1px solid #d4d4d4;box-sizing:border-box;"></div>
<div class="t" style="left:349.8px;transform-origin:0 50%;top:605.94px;font-size:8.47px;line-height:9.74px;color:#8a8a8a;transform:scaleX(0.8032);">202103</div>
<div class="t" style="left:441.3px;transform-origin:0 50%;top:593.14px;font-size:8.47px;line-height:9.74px;color:#101010;transform:scaleX(0.8325);">Skupina dřevin:</div>
<div class="a" style="left:438.3px;top:603.4px;width:81.4px;height:14.4px;background:#fff;border:1px solid #d4d4d4;box-sizing:border-box;"></div>
<div class="t" style="left:440.3px;transform-origin:0 50%;top:605.94px;font-size:8.47px;line-height:9.74px;color:#8a8a8a;transform:scaleX(0.8310);">Smrk, jedle</div>
<div class="t" style="left:532.1px;transform-origin:0 50%;top:593.14px;font-size:8.47px;line-height:9.74px;color:#101010;transform:scaleX(0.8607);">Hmotnatost:</div>
<div class="a" style="left:529.1px;top:603.4px;width:80.6px;height:14.4px;background:#fff;border:1px solid #d4d4d4;box-sizing:border-box;"></div>
<div class="t" style="left:530.8px;transform-origin:0 50%;top:605.94px;font-size:8.47px;line-height:9.74px;color:#8a8a8a;transform:scaleX(0.9235);">99</div>
<div class="t" style="left:169.4px;transform-origin:0 50%;top:632.14px;font-size:8.47px;line-height:9.74px;color:#101010;transform:scaleX(0.8462);">Objem:</div>
<div class="a" style="left:166.3px;top:642.3px;width:81.3px;height:14.2px;background:#fff;border:1px solid #c9c9c9;box-sizing:border-box;"></div>
<div class="t" style="right:899px;transform-origin:100% 50%;top:645.54px;font-size:8.47px;line-height:9.74px;color:#101010;transform:scaleX(0.7927);">12,00</div>
<div class="t" style="left:260.2px;transform-origin:0 50%;top:632.14px;font-size:8.47px;line-height:9.74px;color:#101010;transform:scaleX(0.7547);">Sazba:</div>
<div class="a" style="left:257px;top:642.3px;width:81.6px;height:14.2px;background:#fff;border:1px solid #7eb4ea;box-sizing:border-box;"></div>
<div class="a" style="left:315px;top:644px;width:21.7px;height:10.4px;background:#a8cdf5;"></div>
<div class="t" style="right:808.5px;transform-origin:100% 50%;top:645.54px;font-size:8.47px;line-height:9.74px;color:#101010;transform:scaleX(0.7837);">180,00</div>
<div class="t" style="left:350.8px;transform-origin:0 50%;top:632.14px;font-size:8.47px;line-height:9.74px;color:#101010;transform:scaleX(0.8363);">Příplatek [Kč/m3]:</div>
<div class="a" style="left:347.6px;top:642.2px;width:81.5px;height:14.2px;background:#fff;border:1px solid #c9c9c9;box-sizing:border-box;"></div>
<div class="t" style="left:441.3px;transform-origin:0 50%;top:632.14px;font-size:8.47px;line-height:9.74px;color:#101010;transform:scaleX(0.8259);">Příplatek [%]:</div>
<div class="a" style="left:438.3px;top:642.2px;width:81.4px;height:14.2px;background:#fff;border:1px solid #c9c9c9;box-sizing:border-box;"></div>
<div class="t" style="left:532.1px;transform-origin:0 50%;top:632.14px;font-size:8.47px;line-height:9.74px;color:#101010;transform:scaleX(0.8357);">Náklad:</div>
<div class="a" style="left:529.1px;top:642.2px;width:80.6px;height:14.2px;background:#fff;border:1px solid #c9c9c9;box-sizing:border-box;"></div>
<div class="t" style="right:537px;transform-origin:100% 50%;top:645.74px;font-size:8.47px;line-height:9.74px;color:#101010;transform:scaleX(0.7280);">2 160,00</div>
<div class="a" style="left:163.5px;top:674px;width:460px;height:15.5px;background:#f1efee;"></div>
<div class="t" style="left:518.6px;transform-origin:0 50%;top:678.34px;font-size:8.47px;line-height:9.74px;color:#101010;transform:scaleX(0.7963);">Lupa: 100%</div>
<div class="a" style="left:561.2px;top:681.5px;width:54.6px;height:1.5px;background:#dcdcdc;"></div>
<div class="a" style="left:585.2px;top:677px;width:6.2px;height:11px;background:#f4f4f4;border:1px solid #a8a8a8;box-sizing:border-box;"></div>
<svg class="a" style="left:0;top:0" width="1145" height="691" viewBox="0 0 1145 691"><ellipse cx="119.2" cy="176.6" rx="60.7" ry="13.5" fill="none" stroke="#00b04f" stroke-width="3.6"/></svg>
<svg class="a" style="left:0;top:0" width="1145" height="691" viewBox="0 0 1145 691"><path d="M59 177 H2.4 V407.3 H47.5" fill="none" stroke="#00b04f" stroke-width="3.6" stroke-linejoin="miter" stroke-linecap="butt"/></svg>
<svg class="a" style="left:0;top:0" width="1145" height="691" viewBox="0 0 1145 691"><path d="M57.3 407.3L46.3 401.3L46.3 413.3Z" fill="#00b04f"/></svg>
<svg class="a" style="left:0;top:0" width="1145" height="691" viewBox="0 0 1145 691"><ellipse cx="129.5" cy="436.8" rx="60.75" ry="13.7" fill="none" stroke="#00b04f" stroke-width="3.6"/></svg>
<svg class="a" style="left:0;top:0" width="1145" height="691" viewBox="0 0 1145 691"><path d="M69.5 436.2 H44 V586.6 H150" fill="none" stroke="#00b04f" stroke-width="3.6" stroke-linejoin="miter" stroke-linecap="butt"/></svg>
<svg class="a" style="left:0;top:0" width="1145" height="691" viewBox="0 0 1145 691"><path d="M161 586.6L150 580.6L150 592.6Z" fill="#00b04f"/></svg>
<svg class="a" style="left:0;top:0" width="1145" height="691" viewBox="0 0 1145 691"><ellipse cx="488.2" cy="436.6" rx="23.1" ry="14.4" fill="none" stroke="#00b04f" stroke-width="3.6"/></svg>
<svg class="a" style="left:0;top:0" width="1145" height="691" viewBox="0 0 1145 691"><path d="M488 462 V474.5 H775.3 V306.8 H1062.5 V332" fill="none" stroke="#00b04f" stroke-width="3.6" stroke-linejoin="miter" stroke-linecap="butt"/></svg>
<svg class="a" style="left:0;top:0" width="1145" height="691" viewBox="0 0 1145 691"><path d="M488 452.8L482 463.8L494 463.8Z" fill="#00b04f"/></svg>
<svg class="a" style="left:0;top:0" width="1145" height="691" viewBox="0 0 1145 691"><ellipse cx="1063" cy="346.7" rx="22.95" ry="15.55" fill="none" stroke="#00b04f" stroke-width="3.6"/></svg>
<svg class="a" style="left:0;top:0" width="1145" height="691" viewBox="0 0 1145 691"><path d="M1085.5 346.7 H1130.8 V649 H358" fill="none" stroke="#00b04f" stroke-width="3.6" stroke-linejoin="miter" stroke-linecap="butt"/></svg>
<svg class="a" style="left:0;top:0" width="1145" height="691" viewBox="0 0 1145 691"><path d="M347.6 649L358.6 643L358.6 655Z" fill="#00b04f"/></svg>
<svg class="a" style="left:0;top:0" width="1145" height="691" viewBox="0 0 1145 691"><ellipse cx="323" cy="649.1" rx="22.8" ry="13.1" fill="none" stroke="#00b04f" stroke-width="3.6"/></svg>
</body></html>
